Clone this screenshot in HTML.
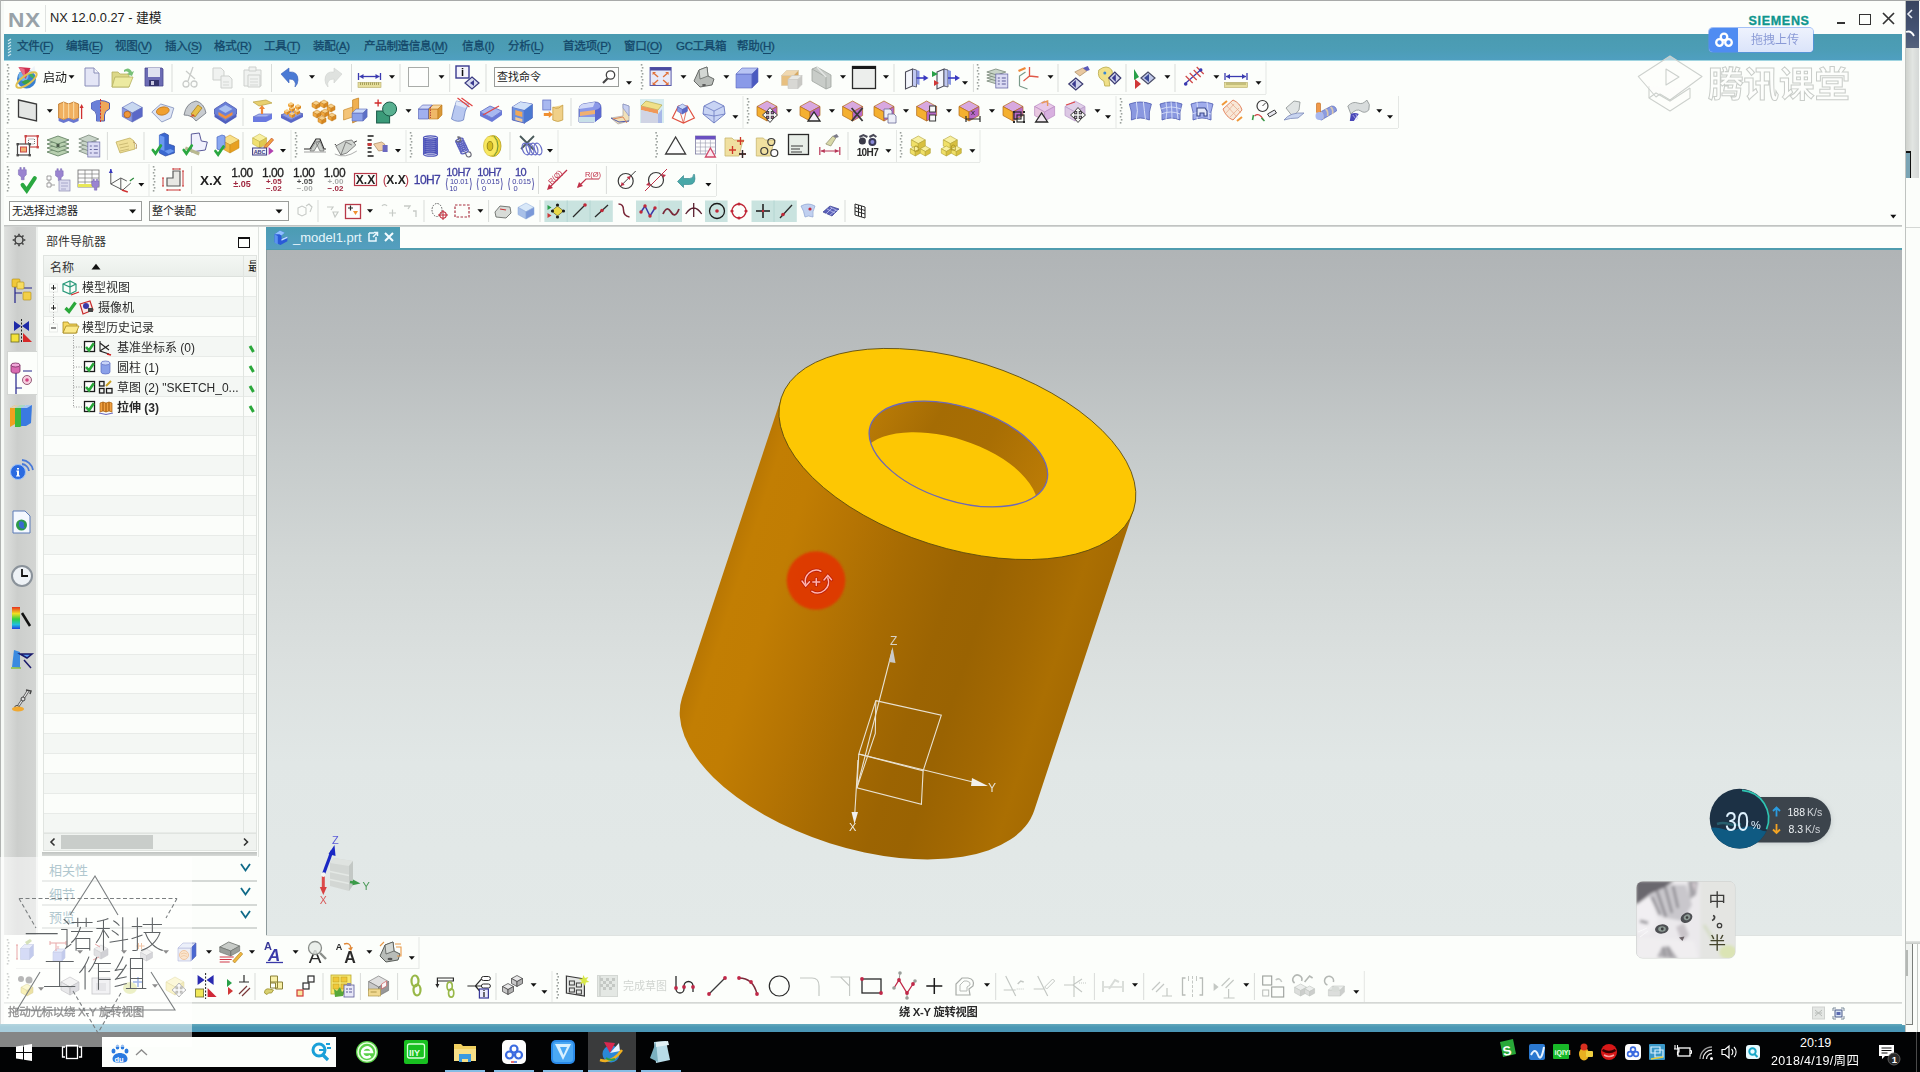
<!DOCTYPE html>
<html lang="zh"><head><meta charset="utf-8"><title>NX 12.0.0.27 - 建模</title>
<style>
*{margin:0;padding:0;box-sizing:border-box}
html,body{width:1920px;height:1072px;overflow:hidden;background:#fcfefb;
 font-family:"Liberation Sans","Noto Sans CJK SC",sans-serif;color:#222}
.a{position:absolute}
.t{position:absolute;white-space:nowrap;line-height:1}
svg{position:absolute;overflow:visible}
.blur{filter:blur(.4px)}
</style></head>
<body>
<!-- p0_base -->
<div class="a" style="left:0;top:0;width:1920px;height:1px;background:#a8aaa9"></div>
<div class="a" style="left:0;top:0;width:1px;height:1032px;background:#b0b3b1"></div>
<div class="a" style="left:1px;top:1px;width:3px;height:1031px;background:#f6f9f6"></div><div class="a" style="left:4px;top:227px;width:1px;height:708px;background:#dfe2df"></div>
<div class="t" style="left:8px;top:9px;font-size:21px;font-weight:bold;color:#98a2a8;letter-spacing:0.5px;transform:scaleX(1.08);transform-origin:0 0">NX</div>
<div class="a" style="left:45px;top:5px;width:1px;height:27px;background:#dfe2e0"></div>
<div class="t" style="left:50px;top:12px;font-size:12.800px;color:#1c1c1c">NX 12.0.0.27 - 建模</div>
<div class="t" style="left:1748.500px;top:14.500px;font-size:12.500px;font-weight:bold;color:#0f968e;letter-spacing:0.700px;-webkit-text-stroke:.35px #0f968e">SIEMENS</div>
<div class="a" style="left:1837px;top:22px;width:8px;height:2px;background:#333"></div>
<div class="a" style="left:1859px;top:14px;width:12px;height:11px;border:1.5px solid #333"></div>
<svg style="left:1882px;top:12px" width="13" height="13"><path d="M1 1L12 12M12 1L1 12" stroke="#333" stroke-width="1.7"/></svg>
<div class="a" style="left:4px;top:34px;width:1898px;height:26px;background:linear-gradient(#4a9bb0,#4c9db6 60%,#4f9fc0)"></div>
<div class="a" style="left:4px;top:60px;width:1898px;height:1px;background:#9fd4e0"></div>
<svg style="left:7px;top:38px" width="6" height="20"><path d="M1 3 l3 -2" stroke="#cfe8ee" stroke-width="1.2"/><path d="M1 6 l3 -2" stroke="#cfe8ee" stroke-width="1.2"/><path d="M1 9 l3 -2" stroke="#cfe8ee" stroke-width="1.2"/><path d="M1 12 l3 -2" stroke="#cfe8ee" stroke-width="1.2"/><path d="M1 15 l3 -2" stroke="#cfe8ee" stroke-width="1.2"/><path d="M1 18 l3 -2" stroke="#cfe8ee" stroke-width="1.2"/></svg>
<div class="t mn" style="left:17px;top:41px;font-size:11.500px;color:#14486a;letter-spacing:-0.300px;-webkit-text-stroke:.3px #14486a">文件(F)</div>
<div class="t mn" style="left:66px;top:41px;font-size:11.500px;color:#14486a;letter-spacing:-0.300px;-webkit-text-stroke:.3px #14486a">编辑(E)</div>
<div class="t mn" style="left:115px;top:41px;font-size:11.500px;color:#14486a;letter-spacing:-0.300px;-webkit-text-stroke:.3px #14486a">视图(V)</div>
<div class="t mn" style="left:165px;top:41px;font-size:11.500px;color:#14486a;letter-spacing:-0.300px;-webkit-text-stroke:.3px #14486a">插入(S)</div>
<div class="t mn" style="left:214px;top:41px;font-size:11.500px;color:#14486a;letter-spacing:-0.300px;-webkit-text-stroke:.3px #14486a">格式(R)</div>
<div class="t mn" style="left:264px;top:41px;font-size:11.500px;color:#14486a;letter-spacing:-0.300px;-webkit-text-stroke:.3px #14486a">工具(T)</div>
<div class="t mn" style="left:313px;top:41px;font-size:11.500px;color:#14486a;letter-spacing:-0.300px;-webkit-text-stroke:.3px #14486a">装配(A)</div>
<div class="t mn" style="left:364px;top:41px;font-size:11.500px;color:#14486a;letter-spacing:-0.300px;-webkit-text-stroke:.3px #14486a">产品制造信息(M)</div>
<div class="t mn" style="left:462px;top:41px;font-size:11.500px;color:#14486a;letter-spacing:-0.300px;-webkit-text-stroke:.3px #14486a">信息(I)</div>
<div class="t mn" style="left:508px;top:41px;font-size:11.500px;color:#14486a;letter-spacing:-0.300px;-webkit-text-stroke:.3px #14486a">分析(L)</div>
<div class="t mn" style="left:563px;top:41px;font-size:11.500px;color:#14486a;letter-spacing:-0.300px;-webkit-text-stroke:.3px #14486a">首选项(P)</div>
<div class="t mn" style="left:624px;top:41px;font-size:11.500px;color:#14486a;letter-spacing:-0.300px;-webkit-text-stroke:.3px #14486a">窗口(O)</div>
<div class="t mn" style="left:676px;top:41px;font-size:11.500px;color:#14486a;letter-spacing:-0.300px;-webkit-text-stroke:.3px #14486a">GC工具箱</div>
<div class="t mn" style="left:737px;top:41px;font-size:11.500px;color:#14486a;letter-spacing:-0.300px;-webkit-text-stroke:.3px #14486a">帮助(H)</div>
<div class="a" style="left:42.9px;top:52.500px;width:6.8px;height:1px;background:#14486a"></div>
<div class="a" style="left:91.9px;top:52.500px;width:7.4px;height:1px;background:#14486a"></div>
<div class="a" style="left:140.9px;top:52.500px;width:7.4px;height:1px;background:#14486a"></div>
<div class="a" style="left:190.9px;top:52.500px;width:7.4px;height:1px;background:#14486a"></div>
<div class="a" style="left:239.9px;top:52.500px;width:8.0px;height:1px;background:#14486a"></div>
<div class="a" style="left:289.9px;top:52.500px;width:6.8px;height:1px;background:#14486a"></div>
<div class="a" style="left:338.9px;top:52.500px;width:7.4px;height:1px;background:#14486a"></div>
<div class="a" style="left:434.7px;top:52.500px;width:9.3px;height:1px;background:#14486a"></div>
<div class="a" style="left:487.6px;top:52.500px;width:3.6px;height:1px;background:#14486a"></div>
<div class="a" style="left:533.9px;top:52.500px;width:6.1px;height:1px;background:#14486a"></div>
<div class="a" style="left:600.1px;top:52.500px;width:7.4px;height:1px;background:#14486a"></div>
<div class="a" style="left:649.9px;top:52.500px;width:8.7px;height:1px;background:#14486a"></div>
<div class="a" style="left:762.9px;top:52.500px;width:8.0px;height:1px;background:#14486a"></div>
<!-- p1_toolbars -->
<div class="a" style="left:6px;top:94px;width:1260px;height:1px;background:#e6e9e6"></div>
<div class="a" style="left:6px;top:128px;width:1392px;height:1px;background:#e6e9e6"></div>
<div class="a" style="left:6px;top:162px;width:974px;height:1px;background:#e6e9e6"></div>
<div class="a" style="left:6px;top:196px;width:710px;height:1px;background:#e6e9e6"></div>
<svg style="left:0;top:0;filter:blur(.4px)" width="1920" height="230" viewBox="0 0 1920 230"><rect x="6.8" y="64" width="1.600" height="1.600" fill="#9aa09c"/><rect x="7.8" y="67" width="1.600" height="1.600" fill="#9aa09c"/><rect x="6.8" y="70" width="1.600" height="1.600" fill="#9aa09c"/><rect x="7.8" y="73" width="1.600" height="1.600" fill="#9aa09c"/><rect x="6.8" y="76" width="1.600" height="1.600" fill="#9aa09c"/><rect x="7.8" y="79" width="1.600" height="1.600" fill="#9aa09c"/><rect x="6.8" y="82" width="1.600" height="1.600" fill="#9aa09c"/><rect x="7.8" y="85" width="1.600" height="1.600" fill="#9aa09c"/><rect x="6.8" y="88" width="1.600" height="1.600" fill="#9aa09c"/><g transform="translate(26.5 77.0)"><circle cx="0" cy="2" r="9.500" fill="#3a80d0"/><circle cx="-3" cy="-1" r="5" fill="#8ac8f0" fill-opacity=".75"/><path d="M-5 5q4 5 10 1q-2-6-10-1z" fill="#3aa048"/><path d="M2-4q5 0 6 5q-4 1-6-5z" fill="#48b058"/><path d="M-8-10l12 1-5 11z" fill="#d03050"/><path d="M-8-10l6 2 1 10z" fill="#e87088"/><path d="M0-3l8-8 1 7z" fill="#e8f0f8" fill-opacity=".8"/><ellipse cx="0" cy="3" rx="12" ry="4.500" fill="none" stroke="#e0c050" stroke-width="2" transform="rotate(-35 0 3)"/></g><text x="43.0" y="81.5" font-size="12" fill="#111" font-weight="normal" text-anchor="start" font-family="Liberation Sans,Noto Sans CJK SC,sans-serif">启动</text><path d="M68.5 75.2h6l-3 3.600z" fill="#111"/><g transform="translate(92.0 77.0)"><path d="M-7-9h9l5 5v13h-14z" fill="#e4e6f6" stroke="#8a8eb8" stroke-width="1"/><path d="M2-9v5h5" fill="#f4f5fc" stroke="#8a8eb8" stroke-width="1"/></g><g transform="translate(122.0 77.0)"><path d="M-10-5h6l2 2h9v13h-17z" fill="#dcd888" stroke="#b4b060" stroke-width="0.8"/><path d="M-10 10l3-10h18l-4 10z" fill="#eceaa0" stroke="#b4b060" stroke-width="0.8"/><path d="M2-7q5-4 8 2l2-1-2 5-5-2 2-1q-2-3-5-1z" fill="#78c078"/></g><g transform="translate(154.0 77.0)"><path d="M-9-9h17l1 1v17h-18z" fill="#6c6cb4" stroke="#4a4a90" stroke-width="0.8"/><path d="M-6-9h12v9h-12z" fill="#dfe2f0"/><path d="M-5 3h10v6h-10z" fill="#34346c"/><path d="M-3 4h3v4h-3z" fill="#c8c8e0"/></g><path d="M172.0 64V92" stroke="#d9dcd9" stroke-width="1"/><g transform="translate(191.0 77.0)"><g fill="none" stroke="#c9ccc9" stroke-width="1.300"><path d="M2-10l-5 14M-5-6l9 8"/><circle cx="-5" cy="7" r="3"/><circle cx="3" cy="7" r="3"/></g></g><g transform="translate(222.0 77.0)"><g fill="#f0f2f0" stroke="#cdd0cd" stroke-width="1"><path d="M-9-9h8l3 3v9h-11z"/><path d="M-1-1h8l3 3v9h-11z"/></g><path d="M1 5h6M1 8h6" stroke="#d5d8d5"/></g><g transform="translate(253.0 77.0)"><g fill="#f0f2f0" stroke="#cdd0cd" stroke-width="1"><path d="M-9-7h17v16h-17z"/><path d="M-4-10h7v4h-7z"/><path d="M-5-2h12v12h-12z"/></g><path d="M-3 2h8M-3 5h8M-3 8h8" stroke="#d5d8d5"/></g><path d="M271.5 64V92" stroke="#d9dcd9" stroke-width="1"/><g transform="translate(290.0 77.0)"><path d="M-9-3l8-6v4q9-1 9 8q0 4-3 7q2-8-6-8v4z" fill="#4a7ad4" stroke="#3a60b8" stroke-width="0.6"/></g><path d="M309.0 75.2h6l-3 3.600z" fill="#111"/><g transform="translate(333.0 77.0)"><path d="M9-3l-8-6v4q-9-1-9 8q0 4 3 7q-2-8 6-8v4z" fill="#dfe2df" stroke="#cfd2cf" stroke-width="0.6"/></g><path d="M351.5 64V92" stroke="#d9dcd9" stroke-width="1"/><g transform="translate(369.5 77.0)"><path d="M-11-4v7M11-4v7" fill="none" stroke="#3a3ab0" stroke-width="1.3"/><path d="M-10-0.500h20" fill="none" stroke="#3a3ab0" stroke-width="1.3"/><path d="M-10-0.500l4-2.500v5zM10-0.500l-4-2.500v5z" fill="#3a3ab0"/><rect x="-11.500" y="5.500" width="23" height="5" fill="#e6de9c" stroke="#b4ac68" stroke-width=".6"/><path d="M-9 5.500v2.500" stroke="#7a7630" stroke-width=".6"/><path d="M-7 5.500v2.500" stroke="#7a7630" stroke-width=".6"/><path d="M-5 5.500v2.500" stroke="#7a7630" stroke-width=".6"/><path d="M-3 5.500v2.500" stroke="#7a7630" stroke-width=".6"/><path d="M-1 5.500v2.500" stroke="#7a7630" stroke-width=".6"/><path d="M1 5.500v2.500" stroke="#7a7630" stroke-width=".6"/><path d="M3 5.500v2.500" stroke="#7a7630" stroke-width=".6"/><path d="M5 5.500v2.500" stroke="#7a7630" stroke-width=".6"/><path d="M7 5.500v2.500" stroke="#7a7630" stroke-width=".6"/><path d="M9 5.500v2.500" stroke="#7a7630" stroke-width=".6"/></g><path d="M389.0 75.2h6l-3 3.600z" fill="#111"/><path d="M400.0 64V92" stroke="#d9dcd9" stroke-width="1"/><rect x="408.500" y="67.500" width="20" height="19" fill="#fdfefd" stroke="#a9aca9" stroke-width="1"/><path d="M438.5 75.2h6l-3 3.600z" fill="#111"/><path d="M449.7 64V92" stroke="#d9dcd9" stroke-width="1"/><g transform="translate(467.0 77.0)"><rect x="-11" y="-11" width="13" height="12" fill="#f4f4fc" stroke="#3a3a90" stroke-width="1.400"/><text x="-4.5" y="-1.5" font-size="11" fill="#111" font-weight="bold" text-anchor="middle" font-family="Liberation Sans,Noto Sans CJK SC,sans-serif" font-family="Liberation Serif,serif">i</text><path d="M5 0l7 6-7 6-7-6z" fill="#d8dcf0" stroke="#3a3a80" stroke-width="1.2"/><path d="M7 3v6l-4-3z" fill="#3a3a90"/></g><path d="M486.0 64V92" stroke="#d9dcd9" stroke-width="1"/><rect x="494.500" y="67.500" width="124" height="19" fill="#fdfefd" stroke="#9a9d9a" stroke-width="1"/><text x="497.0" y="81.3" font-size="11" fill="#222" font-weight="normal" text-anchor="start" font-family="Liberation Sans,Noto Sans CJK SC,sans-serif">查找命令</text><circle cx="610.500" cy="75" r="4.200" fill="#fff" stroke="#444" stroke-width="1.300"/><path d="M607.500 78.500l-4.500 4.500" stroke="#444" stroke-width="2.200"/><path d="M626.0 81.2h6l-3 3.600z" fill="#111"/><rect x="640.8" y="64" width="1.600" height="1.600" fill="#9aa09c"/><rect x="641.8" y="67" width="1.600" height="1.600" fill="#9aa09c"/><rect x="640.8" y="70" width="1.600" height="1.600" fill="#9aa09c"/><rect x="641.8" y="73" width="1.600" height="1.600" fill="#9aa09c"/><rect x="640.8" y="76" width="1.600" height="1.600" fill="#9aa09c"/><rect x="641.8" y="79" width="1.600" height="1.600" fill="#9aa09c"/><rect x="640.8" y="82" width="1.600" height="1.600" fill="#9aa09c"/><rect x="641.8" y="85" width="1.600" height="1.600" fill="#9aa09c"/><rect x="640.8" y="88" width="1.600" height="1.600" fill="#9aa09c"/><g transform="translate(660.6 77.0)"><rect x="-10.500" y="-9.500" width="21" height="18" fill="#e8eaf8" stroke="#5a5aa8" stroke-width="1"/><rect x="-10.500" y="-9.500" width="21" height="3" fill="#4a4aa0"/><path d="M-2.500 0l-4-3.500M2.500 0l4-3.500M-2.500 3l-4 3.500M2.500 3l4 3.500" fill="none" stroke="#e07038" stroke-width="1.4"/><path d="M-8-5h3.500l-3.500 3zM8-5h-3.500l3.500 3zM-8 8h3.500l-3.500-3zM8 8h-3.500l3.500-3z" fill="#e07038"/></g><path d="M680.5 75.2h6l-3 3.600z" fill="#111"/><g transform="translate(704.0 77.0)"><path d="M-10 4l5-11 8-3 1 9 6 3-2 6-12 2z" fill="#b8bcb8" stroke="#5a5e5a" stroke-width="0.9"/><path d="M-5-7l8-3 1 9-8 3z" fill="#d4d8d4" stroke="#5a5e5a" stroke-width="0.7"/><ellipse cx="0" cy="8" rx="2" ry="1" fill="#555"/></g><path d="M723.4 75.2h6l-3 3.600z" fill="#111"/><g transform="translate(747.0 78.0)"><path d="M-11.0 -4.0h16.0v14.0h-16.0z" fill="#8a9ae8" stroke="#5a68c0" stroke-width=".6" stroke-linejoin="round"/><path d="M-11.0 -4.0l6.0 -6.0h16.0l-6.0 6.0z" fill="#b8c4f4" stroke="#5a68c0" stroke-width=".6" stroke-linejoin="round"/><path d="M5.0 -4.0l6.0 -6.0v14.0l-6.0 6.0z" fill="#4a5ac0" stroke="#5a68c0" stroke-width=".6" stroke-linejoin="round"/></g><path d="M766.4 75.2h6l-3 3.600z" fill="#111"/><g transform="translate(790.0 78.0)"><path d="M-8.5 -2.5h12.0v10.0h-12.0z" fill="#e8c080" stroke="#d8c8a8" stroke-width=".6" stroke-linejoin="round"/><path d="M-8.5 -2.5l5.0 -5.0h12.0l-5.0 5.0z" fill="#f0d8b0" stroke="#d8c8a8" stroke-width=".6" stroke-linejoin="round"/><path d="M3.5 -2.5l5.0 -5.0v10.0l-5.0 5.0z" fill="#d8a860" stroke="#d8c8a8" stroke-width=".6" stroke-linejoin="round"/><g transform="translate(5 4)"><path d="M-7.0 -2.5h10.0v9.0h-10.0z" fill="#d8d8d4" stroke="#c8c8c4" stroke-width=".6" stroke-linejoin="round"/><path d="M-7.0 -2.5l4.0 -4.0h10.0l-4.0 4.0z" fill="#e8e8e4" stroke="#c8c8c4" stroke-width=".6" stroke-linejoin="round"/><path d="M3.0 -2.5l4.0 -4.0v9.0l-4.0 4.0z" fill="#c8c8c4" stroke="#c8c8c4" stroke-width=".6" stroke-linejoin="round"/></g></g><g transform="translate(821.0 78.0)"><path d="M-9-9l5-2 14 8v12l-5 2-14-8z" fill="#c8ccc8" stroke="#a0a4a0" stroke-width="0.8"/><path d="M-9-9l14 8v12" fill="none" stroke="#a0a4a0" stroke-width="0.8"/><path d="M-4-11l9 10" fill="none" stroke="#e4e6e4" stroke-width="1.5"/></g><path d="M840.0 75.2h6l-3 3.600z" fill="#111"/><rect x="852.500" y="66.500" width="23" height="22" fill="#eceeec" stroke="#2a2a2a" stroke-width="1.300"/><rect x="852" y="66" width="24" height="3" fill="#1a1a1a"/><path d="M883.0 75.2h6l-3 3.600z" fill="#111"/><path d="M894.0 64V92" stroke="#d9dcd9" stroke-width="1"/><g transform="translate(914.5 78.0)"><path d="M-9-6l7-3v17l-7 3z" fill="#f4f6fc" stroke="#4a4a58" stroke-width="1.1"/><path d="M-2-9l4 1v17l-4-1z" fill="#c0c8f0" stroke="#4a4a58" stroke-width="0.8"/><path d="M2-8l3 1v14l-3-1" fill="#8a98e0"/><path d="M2 0h9" fill="none" stroke="#3a3ac0" stroke-width="1.6"/><path d="M9-3l5 3-5 3z" fill="#3a3ac0"/></g><g transform="translate(946.0 78.0)"><path d="M-9-6l7-3v17l-7 3z" fill="#f4f6fc" stroke="#4a4a58" stroke-width="1.1"/><path d="M-2-9l4 1v17l-4-1z" fill="#c0c8f0" stroke="#4a4a58" stroke-width="0.8"/><path d="M2-8l3 1v14l-3-1" fill="#8a98e0"/><path d="M2 0h9" fill="none" stroke="#3a3ac0" stroke-width="1.6"/><path d="M9-3l5 3-5 3z" fill="#3a3ac0"/><path d="M-14-7l6 3-6 3z" fill="#28a048"/><path d="M-12 2l5 3-5 3z" fill="#d03838"/></g><path d="M962.0 81.2h6l-3 3.600z" fill="#111"/><path d="M973.4 64V92" stroke="#d9dcd9" stroke-width="1"/><rect x="976.8" y="64" width="1.600" height="1.600" fill="#9aa09c"/><rect x="977.8" y="67" width="1.600" height="1.600" fill="#9aa09c"/><rect x="976.8" y="70" width="1.600" height="1.600" fill="#9aa09c"/><rect x="977.8" y="73" width="1.600" height="1.600" fill="#9aa09c"/><rect x="976.8" y="76" width="1.600" height="1.600" fill="#9aa09c"/><rect x="977.8" y="79" width="1.600" height="1.600" fill="#9aa09c"/><rect x="976.8" y="82" width="1.600" height="1.600" fill="#9aa09c"/><rect x="977.8" y="85" width="1.600" height="1.600" fill="#9aa09c"/><rect x="976.8" y="88" width="1.600" height="1.600" fill="#9aa09c"/><g transform="translate(997.8 78.0)"><path d="M-11 3l9-3 10 3-9 3z" fill="#c8d4c8" stroke="#6a7a6a" stroke-width="0.7"/><path d="M-11 0l9-3 10 3-9 3z" fill="#c8d4c8" stroke="#6a7a6a" stroke-width="0.7"/><path d="M-11 -3l9-3 10 3-9 3z" fill="#c8d4c8" stroke="#6a7a6a" stroke-width="0.7"/><path d="M-11 -6l9-3 10 3-9 3z" fill="#c8d4c8" stroke="#6a7a6a" stroke-width="0.7"/><rect x="-2" y="-4" width="12" height="14" fill="#dcdcf4" stroke="#6a6aa8" stroke-width=".8"/><path d="M0 0h2M4 0h4M0 3h2M4 3h4M0 6h2M4 6h4" fill="none" stroke="#5a5a98" stroke-width="1"/></g><g transform="translate(1027.5 78.0)"><path d="M-8 8v-10l6-4M-8 8l8 3" fill="none" stroke="#7a9a8a" stroke-width="1.2"/><path d="M2-2v-9M2-2l9 1M2-2l-6 5" fill="none" stroke="#e05848" stroke-width="1.3"/><path d="M-9-7l7-3" fill="none" stroke="#f08838" stroke-width="2.2"/></g><path d="M1047.5 75.2h6l-3 3.600z" fill="#111"/><path d="M1058.0 64V92" stroke="#d9dcd9" stroke-width="1"/><g transform="translate(1076.8 78.0)"><path d="M-8 6l7-6 7 6-7 6z" fill="#d0d4ec" stroke="#3a3a70" stroke-width="1.2"/><path d="M-1 2v8l-4-4z" fill="#3a3a90"/><path d="M-2-6l8-4 4 3-7 5z" fill="#e8c8a0" stroke="#a88860" stroke-width="0.7"/><path d="M6-10l5-2 2 4-3 1z" fill="#5a5ab8"/></g><g transform="translate(1107.8 78.0)"><path d="M-9-8q8-6 13 0q2 5-3 8l1 8h-5l-1-5q-7-3-5-11z" fill="#f0e088" stroke="#b8a848" stroke-width="0.8"/><circle cx="-3" cy="-5" r="1.500" fill="#3a88d0"/><g transform="translate(7 0)"><path d="M-6 0l6-6 6 6-6 6z" fill="#d0d4ec" stroke="#3a3a70" stroke-width="1.2"/><path d="M1-4v8l-4-4z" fill="#3a3a90"/></g></g><path d="M1126.0 64V92" stroke="#d9dcd9" stroke-width="1"/><g transform="translate(1144.0 78.0)"><path d="M-10-9l5 8-5 3z" fill="#28a048"/><path d="M-9 1l6 5-6 5z" fill="#d03838"/><g transform="translate(4 0)"><path d="M-7 0l7-6 7 6-7 6z" fill="#c0c8e8" stroke="#4a4e68" stroke-width="1.2"/><path d="M1-4v8l-5-4z" fill="#3a4a98"/></g></g><path d="M1164.4 75.2h6l-3 3.600z" fill="#111"/><path d="M1175.0 64V92" stroke="#d9dcd9" stroke-width="1"/><g transform="translate(1193.7 77.0)"><path d="M-9 7l17-15" fill="none" stroke="#3a3ab0" stroke-width="1.2"/><path d="M-8 -1l7 7" fill="none" stroke="#d04848" stroke-width="1.2"/><path d="M-4 -4l7 7" fill="none" stroke="#d04848" stroke-width="1.2"/><path d="M0 -7l7 7" fill="none" stroke="#d04848" stroke-width="1.2"/><path d="M3 -10l7 7" fill="none" stroke="#d04848" stroke-width="1.2"/><circle cx="-8" cy="7" r="1.800" fill="#3a3ab0"/><circle cx="7" cy="-7" r="1.800" fill="#3a3ab0"/></g><path d="M1213.4 75.2h6l-3 3.600z" fill="#111"/><g transform="translate(1236.0 77.0)"><path d="M-11-4v7M11-4v7" fill="none" stroke="#3a3ab0" stroke-width="1.3"/><path d="M-10-0.500h20" fill="none" stroke="#3a3ab0" stroke-width="1.3"/><path d="M-10-0.500l4-2.500v5zM10-0.500l-4-2.500v5z" fill="#3a3ab0"/><rect x="-11.500" y="5.500" width="23" height="5" fill="#e6de9c" stroke="#b4ac68" stroke-width=".6"/><path d="M-9 5.500v2.500" stroke="#7a7630" stroke-width=".6"/><path d="M-7 5.500v2.500" stroke="#7a7630" stroke-width=".6"/><path d="M-5 5.500v2.500" stroke="#7a7630" stroke-width=".6"/><path d="M-3 5.500v2.500" stroke="#7a7630" stroke-width=".6"/><path d="M-1 5.500v2.500" stroke="#7a7630" stroke-width=".6"/><path d="M1 5.500v2.500" stroke="#7a7630" stroke-width=".6"/><path d="M3 5.500v2.500" stroke="#7a7630" stroke-width=".6"/><path d="M5 5.500v2.500" stroke="#7a7630" stroke-width=".6"/><path d="M7 5.500v2.500" stroke="#7a7630" stroke-width=".6"/><path d="M9 5.500v2.500" stroke="#7a7630" stroke-width=".6"/></g><path d="M1255.5 81.2h6l-3 3.600z" fill="#111"/><path d="M1266.0 62V94" stroke="#e4e7e4" stroke-width="1"/><rect x="6.8" y="98" width="1.600" height="1.600" fill="#9aa09c"/><rect x="7.8" y="101" width="1.600" height="1.600" fill="#9aa09c"/><rect x="6.8" y="104" width="1.600" height="1.600" fill="#9aa09c"/><rect x="7.8" y="107" width="1.600" height="1.600" fill="#9aa09c"/><rect x="6.8" y="110" width="1.600" height="1.600" fill="#9aa09c"/><rect x="7.8" y="113" width="1.600" height="1.600" fill="#9aa09c"/><rect x="6.8" y="116" width="1.600" height="1.600" fill="#9aa09c"/><rect x="7.8" y="119" width="1.600" height="1.600" fill="#9aa09c"/><rect x="6.8" y="122" width="1.600" height="1.600" fill="#9aa09c"/><g transform="translate(27.5 111.0)"><path d="M-9-11l18 4v17l-18-4z" fill="#e4e6e4" stroke="#3a3a3a" stroke-width="1.3"/></g><path d="M46.8 109.2h6l-3 3.600z" fill="#111"/><g transform="translate(69.6 111.0)"><path d="M-11-7l5-2 5 2 5-2 5 2v14l-5 2-5-2-5 2-5-2z" fill="#f0b060" stroke="#b87020" stroke-width="0.8"/><path d="M-6-9v16M-1-7v16M4-9v16" fill="none" stroke="#f8d8a0" stroke-width="1.2"/><path d="M-11 7l5 2 5-2 5 2 5-2v3l-5 2-5-2-5 2-5-2z" fill="#6a78d0"/><path d="M12 8v-12" fill="none" stroke="#d03030" stroke-width="1.3"/><path d="M10-3l2-4 2 4z" fill="#d03030"/></g><g transform="translate(100.5 111.0)"><path d="M-9-8q9-5 18 0v6q-5 2-5 6v6h-8v-6q0-4-5-6z" fill="#f0a858" stroke="#4a58b0" stroke-width="1"/><path d="M-9-8q0 0 0 6q5 2 5 6v6h4v-21q-5 0-9 3z" fill="#6a80d8"/><path d="M0-12v24" fill="none" stroke="#d03030" stroke-width="1" stroke-dasharray="2 1.500"/></g><g transform="translate(132.3 112.0)"><path d="M0 -10.0L10.0 -4.5L0 1.0L-10.0 -4.5Z" fill="#c8d8f0" stroke="#5a68b8" stroke-width="0.6" stroke-linejoin="round"/><path d="M-10.0 -4.5L0 1.0L0 10.0L-10.0 4.5Z" fill="#8a98e0" stroke="#5a68b8" stroke-width="0.6" stroke-linejoin="round"/><path d="M10.0 -4.5L0 1.0L0 10.0L10.0 4.5Z" fill="#5a68c8" stroke="#5a68b8" stroke-width="0.6" stroke-linejoin="round"/><circle cx="-5" cy="2.500" r="3.300" fill="#f09838" stroke="#a85818" stroke-width=".7"/></g><g transform="translate(162.8 111.0)"><path d="M-11 1l9-8 13 4-3 10-9 4z" fill="#dce4f4" stroke="#8a98c0" stroke-width="0.9"/><ellipse cx="0" cy="0" rx="6.500" ry="4" fill="#f0a030" stroke="#b87018" stroke-width=".7" transform="rotate(-12)"/></g><g transform="translate(194.0 111.0)"><path d="M-10 4q2-12 12-14q8 2 10 12l-10 8q-4-6-12-6z" fill="#c8ccd0" stroke="#7a8088" stroke-width="0.9"/><path d="M-3 3l7-9 4 3-7 9z" fill="#e8c048" stroke="#a88020" stroke-width="0.8"/><path d="M-4 6l3-3 2 2z" fill="#d04828"/></g><g transform="translate(225.5 111.0)"><path d="M-11-2l11-7 11 7v5l-11 7-11-7z" fill="#6a80d8" stroke="#4a58b0" stroke-width="0.8"/><path d="M-7-2l7-4 7 4-7 4z" fill="#a8c0f0"/><path d="M-7 1l7 4 7-4v3l-7 4-7-4z" fill="#f09040"/><path d="M-11 3l11 7 11-7v3l-11 7-11-7z" fill="#5060c0"/></g><path d="M243.0 98V126" stroke="#d9dcd9" stroke-width="1"/><g transform="translate(262.0 111.0)"><path d="M-9-9l13-2 6 3-13 3z" fill="#e8d070" stroke="#b8a040" stroke-width="0.7"/><path d="M-9 6l6-3h13l-6 3z" fill="#a8b4f0" stroke="#5a68c0" stroke-width="0.7"/><path d="M-9 6h13v5h-13zM4 6l6-3v5l-6 3z" fill="#6a7ae0"/><path d="M0 3v-6" fill="none" stroke="#f08838" stroke-width="2.2"/><path d="M-3-2l3-4 3 4z" fill="#f08838"/></g><g transform="translate(292.0 112.0)"><path d="M-11 3l12-5 10 4-12 6z" fill="#8a98e0" stroke="#4a58b0" stroke-width="0.8"/><path d="M-11 3l10 5v3l-10-5zM-1 8l12-6v3l-12 6z" fill="#5a68c8"/><g transform="translate(-5 0)"><path d="M0 -3.0L3.0 -1.3L0 0.3L-3.0 -1.3Z" fill="#f8d088"/><path d="M-3.0 -1.3L0 0.3L0 3.0L-3.0 1.3Z" fill="#f0a840"/><path d="M3.0 -1.3L0 0.3L0 3.0L3.0 1.3Z" fill="#d88820"/></g><g transform="translate(0 -3)"><path d="M0 -3.0L3.0 -1.3L0 0.3L-3.0 -1.3Z" fill="#f8d088"/><path d="M-3.0 -1.3L0 0.3L0 3.0L-3.0 1.3Z" fill="#f0a840"/><path d="M3.0 -1.3L0 0.3L0 3.0L3.0 1.3Z" fill="#d88820"/></g><g transform="translate(5 0)"><path d="M0 -3.0L3.0 -1.3L0 0.3L-3.0 -1.3Z" fill="#f8d088"/><path d="M-3.0 -1.3L0 0.3L0 3.0L-3.0 1.3Z" fill="#f0a840"/><path d="M3.0 -1.3L0 0.3L0 3.0L3.0 1.3Z" fill="#d88820"/></g><g transform="translate(0 3)"><path d="M0 -3.0L3.0 -1.3L0 0.3L-3.0 -1.3Z" fill="#f8d088"/><path d="M-3.0 -1.3L0 0.3L0 3.0L-3.0 1.3Z" fill="#f0a840"/><path d="M3.0 -1.3L0 0.3L0 3.0L3.0 1.3Z" fill="#d88820"/></g><g transform="translate(-1 -7)"><path d="M0 -3.0L3.0 -1.3L0 0.3L-3.0 -1.3Z" fill="#f8d088"/><path d="M-3.0 -1.3L0 0.3L0 3.0L-3.0 1.3Z" fill="#f0a840"/><path d="M3.0 -1.3L0 0.3L0 3.0L3.0 1.3Z" fill="#d88820"/></g><g transform="translate(6 -5)"><path d="M0 -3.0L3.0 -1.3L0 0.3L-3.0 -1.3Z" fill="#f8d088"/><path d="M-3.0 -1.3L0 0.3L0 3.0L-3.0 1.3Z" fill="#f0a840"/><path d="M3.0 -1.3L0 0.3L0 3.0L3.0 1.3Z" fill="#d88820"/></g></g><g transform="translate(323.0 111.0)"><g transform="translate(-7 -6)"><path d="M0 -4.0L4.0 -1.8L0 0.4L-4.0 -1.8Z" fill="#f8d088" stroke="#c07818" stroke-width="0.5" stroke-linejoin="round"/><path d="M-4.0 -1.8L0 0.4L0 4.0L-4.0 1.8Z" fill="#f0a840" stroke="#c07818" stroke-width="0.5" stroke-linejoin="round"/><path d="M4.0 -1.8L0 0.4L0 4.0L4.0 1.8Z" fill="#d88820" stroke="#c07818" stroke-width="0.5" stroke-linejoin="round"/></g><g transform="translate(1 -7)"><path d="M0 -4.0L4.0 -1.8L0 0.4L-4.0 -1.8Z" fill="#f8d088" stroke="#c07818" stroke-width="0.5" stroke-linejoin="round"/><path d="M-4.0 -1.8L0 0.4L0 4.0L-4.0 1.8Z" fill="#f0a840" stroke="#c07818" stroke-width="0.5" stroke-linejoin="round"/><path d="M4.0 -1.8L0 0.4L0 4.0L4.0 1.8Z" fill="#d88820" stroke="#c07818" stroke-width="0.5" stroke-linejoin="round"/></g><g transform="translate(8 -3)"><path d="M0 -4.0L4.0 -1.8L0 0.4L-4.0 -1.8Z" fill="#f8d088" stroke="#c07818" stroke-width="0.5" stroke-linejoin="round"/><path d="M-4.0 -1.8L0 0.4L0 4.0L-4.0 1.8Z" fill="#f0a840" stroke="#c07818" stroke-width="0.5" stroke-linejoin="round"/><path d="M4.0 -1.8L0 0.4L0 4.0L4.0 1.8Z" fill="#d88820" stroke="#c07818" stroke-width="0.5" stroke-linejoin="round"/></g><g transform="translate(-6 3)"><path d="M0 -4.0L4.0 -1.8L0 0.4L-4.0 -1.8Z" fill="#f8d088" stroke="#c07818" stroke-width="0.5" stroke-linejoin="round"/><path d="M-4.0 -1.8L0 0.4L0 4.0L-4.0 1.8Z" fill="#f0a840" stroke="#c07818" stroke-width="0.5" stroke-linejoin="round"/><path d="M4.0 -1.8L0 0.4L0 4.0L4.0 1.8Z" fill="#d88820" stroke="#c07818" stroke-width="0.5" stroke-linejoin="round"/></g><g transform="translate(2 2)"><path d="M0 -4.0L4.0 -1.8L0 0.4L-4.0 -1.8Z" fill="#f8d088" stroke="#c07818" stroke-width="0.5" stroke-linejoin="round"/><path d="M-4.0 -1.8L0 0.4L0 4.0L-4.0 1.8Z" fill="#f0a840" stroke="#c07818" stroke-width="0.5" stroke-linejoin="round"/><path d="M4.0 -1.8L0 0.4L0 4.0L4.0 1.8Z" fill="#d88820" stroke="#c07818" stroke-width="0.5" stroke-linejoin="round"/></g><g transform="translate(9 6)"><path d="M0 -4.0L4.0 -1.8L0 0.4L-4.0 -1.8Z" fill="#f8d088" stroke="#c07818" stroke-width="0.5" stroke-linejoin="round"/><path d="M-4.0 -1.8L0 0.4L0 4.0L-4.0 1.8Z" fill="#f0a840" stroke="#c07818" stroke-width="0.5" stroke-linejoin="round"/><path d="M4.0 -1.8L0 0.4L0 4.0L4.0 1.8Z" fill="#d88820" stroke="#c07818" stroke-width="0.5" stroke-linejoin="round"/></g><g transform="translate(-1 9)"><path d="M0 -4.0L4.0 -1.8L0 0.4L-4.0 -1.8Z" fill="#f8d088" stroke="#c07818" stroke-width="0.5" stroke-linejoin="round"/><path d="M-4.0 -1.8L0 0.4L0 4.0L-4.0 1.8Z" fill="#f0a840" stroke="#c07818" stroke-width="0.5" stroke-linejoin="round"/><path d="M4.0 -1.8L0 0.4L0 4.0L4.0 1.8Z" fill="#d88820" stroke="#c07818" stroke-width="0.5" stroke-linejoin="round"/></g></g><g transform="translate(355.6 111.0)"><path d="M-3-11l6-2v22l-6 3z" fill="#f0b050" stroke="#c88828" stroke-width="0.8"/><path d="M-12-1l9-3v10l-9 3z" fill="#f4c478" stroke="#c88828" stroke-width="0.7"/><g transform="translate(4 4)"><path d="M-7.5 -2.0h11.0v8.0h-11.0z" fill="#8aa0e8" stroke="#5a68b8" stroke-width=".6" stroke-linejoin="round"/><path d="M-7.5 -2.0l4.0 -4.0h11.0l-4.0 4.0z" fill="#c8d8f8" stroke="#5a68b8" stroke-width=".6" stroke-linejoin="round"/><path d="M3.5 -2.0l4.0 -4.0v8.0l-4.0 4.0z" fill="#5a70c8" stroke="#5a68b8" stroke-width=".6" stroke-linejoin="round"/></g></g><g transform="translate(386.6 111.0)"><rect x="-10" y="0" width="13" height="12" fill="#3a9a78" stroke="#1a5a48" stroke-width="1"/><circle cx="3" cy="-2" r="7" fill="#58b090" stroke="#1a5a48" stroke-width="1"/><path d="M-12-8h7M-8.500-11.500v7" fill="none" stroke="#d02828" stroke-width="1.3"/></g><path d="M405.5 109.2h6l-3 3.600z" fill="#111"/><g transform="translate(429.5 112.0)"><g transform="translate(-4 0)"><path d="M-7.0 -3.0h10.0v10.0h-10.0z" fill="#a0b0f0" stroke="#4a58b0" stroke-width=".6" stroke-linejoin="round"/><path d="M-7.0 -3.0l4.0 -4.0h10.0l-4.0 4.0z" fill="#d0d8f8" stroke="#4a58b0" stroke-width=".6" stroke-linejoin="round"/><path d="M3.0 -3.0l4.0 -4.0v10.0l-4.0 4.0z" fill="#6a78d0" stroke="#4a58b0" stroke-width=".6" stroke-linejoin="round"/></g><g transform="translate(6 0)"><path d="M-6.5 -3.0h9.0v10.0h-9.0z" fill="#f0b868" stroke="#c07818" stroke-width=".6" stroke-linejoin="round"/><path d="M-6.5 -3.0l4.0 -4.0h9.0l-4.0 4.0z" fill="#f8d8a0" stroke="#c07818" stroke-width=".6" stroke-linejoin="round"/><path d="M2.5 -3.0l4.0 -4.0v10.0l-4.0 4.0z" fill="#d89838" stroke="#c07818" stroke-width=".6" stroke-linejoin="round"/></g><path d="M1-5v11" fill="none" stroke="#b03030" stroke-width="0.8" stroke-dasharray="1.500 1"/></g><g transform="translate(460.5 111.0)"><path d="M-9 8q2-10 5-18l12 3q-4 6-5 16q-6 3-12-1z" fill="#b8c8f0" stroke="#6a80c0" stroke-width="0.8"/><path d="M-4-10l12 3-3 4-10-3z" fill="#e0e8f8"/><path d="M-3-13l12 9M1-13l11 8" fill="none" stroke="#e04040" stroke-width="1.2"/></g><g transform="translate(491.0 112.0)"><path d="M-11 0l10-6 12 5-10 7z" fill="#a8b8f0" stroke="#5a68c0" stroke-width="0.8"/><path d="M-11 0l12 6v4l-12-6zM1 6l10-7v4l-10 7z" fill="#6a7ad8"/><path d="M-8 3l16-9" fill="none" stroke="#e04848" stroke-width="1.3"/></g><g transform="translate(522.3 111.0)"><path d="M-10-4l8-5 12 2v14l-8 5-12-3z" fill="#6a90e0" stroke="#4a58b0" stroke-width="0.8"/><path d="M-10-4l12 3v14" fill="none" stroke="#4a58b0" stroke-width="0.6"/><path d="M-7-1l7 2v5l-7-2z" fill="#f0a858"/><path d="M-7 6l7 2v3l-7-2z" fill="#f0c898"/><path d="M2-1l8-6v14l-8 5z" fill="#4a78d0"/><path d="M-2-9l12 2-8 6-12-3z" fill="#d0e0f8"/></g><g transform="translate(552.8 111.0)"><rect x="-10" y="-11" width="8" height="10" fill="#a8b8f0" stroke="#5a68c0" stroke-width=".7"/><path d="M0-4v13q5 3 10 0v-15" fill="#f0d088" stroke="#c09838" stroke-width="0.7"/><path d="M0-4q3 2 6 1l4-3" fill="none" stroke="#c09838" stroke-width="0.7"/><path d="M-9 2h5v-2l4 3.500-4 3.500v-2h-5z" fill="#f09030"/></g><path d="M571.0 98V126" stroke="#d9dcd9" stroke-width="1"/><g transform="translate(590.0 112.0)"><path d="M-11-3q0-4 4-5l12-2q6 0 6 6v9l-7 5h-15z" fill="#8a98e8" stroke="#4a58b0" stroke-width="0.8"/><path d="M-11-3q0-4 4-5l12-2-2 5-14 2z" fill="#d0d8f8"/><path d="M-10 0l15-2v4l-15 2z" fill="#f0b070"/><path d="M-11 5h16v5h-16z" fill="#c8e0e8"/><path d="M5-2q6-1 6-6v13l-6 5z" fill="#5a68d0"/></g><g transform="translate(621.0 112.0)"><path d="M-10 6l12-2 0-12 6 2v15l-11 3z" fill="#f0e0b8" stroke="#a8a0a0" stroke-width="0.7"/><path d="M2-8l6 2v10l-6-8z" fill="#c8d0f0" stroke="#7a88c0" stroke-width="0.6"/><path d="M-10 6l8 4 10-1" fill="none" stroke="#4a58b0" stroke-width="1"/><path d="M-8 7l10-2 4 6" fill="none" stroke="#e08858" stroke-width="1"/></g><g transform="translate(652.0 111.0)"><rect x="-12" y="-12" width="24" height="24" fill="#c0e0e8" fill-opacity=".6"/><path d="M-11-5l5-5 16 4-4 5z" fill="#f0e088" stroke="#a8a040" stroke-width="0.6"/><path d="M-11-5l17 4v4l-17-4z" fill="#f09858"/><path d="M-11-1l17 4v9h-17z" fill="#d0d4e4"/><path d="M6 3l4-5v14h-4z" fill="#a8b8e8"/></g><g transform="translate(683.4 112.0)"><path d="M-11 6l6-12h9l7 12-11 5z" fill="none" stroke="#e05040" stroke-width="1.2"/><path d="M-5-6l5 17M4-6l-4 17" fill="none" stroke="#e05040" stroke-width="0.8"/><g transform="translate(-1 -3)"><path d="M0 -5.0L5.0 -2.2L0 0.5L-5.0 -2.2Z" fill="#c8d8f8" stroke="#4a58b0" stroke-width="0.5" stroke-linejoin="round"/><path d="M-5.0 -2.2L0 0.5L0 5.0L-5.0 2.2Z" fill="#8a9ae8" stroke="#4a58b0" stroke-width="0.5" stroke-linejoin="round"/><path d="M5.0 -2.2L0 0.5L0 5.0L5.0 2.2Z" fill="#5a68c8" stroke="#4a58b0" stroke-width="0.5" stroke-linejoin="round"/></g></g><g transform="translate(714.0 112.0)"><path d="M0-11l10 5 1 8-11 9-11-9 1-8z" fill="#c8d4f4" stroke="#6a78c0" stroke-width="0.9"/><path d="M-10-6l10 5 10-5M0-1v12M-11 2l11 2 11-2" fill="none" stroke="#6a78c0" stroke-width="0.8"/></g><path d="M732.4 115.2h6l-3 3.600z" fill="#111"/><path d="M743.0 96V128" stroke="#e4e7e4" stroke-width="1"/><rect x="746.8" y="98" width="1.600" height="1.600" fill="#9aa09c"/><rect x="747.8" y="101" width="1.600" height="1.600" fill="#9aa09c"/><rect x="746.8" y="104" width="1.600" height="1.600" fill="#9aa09c"/><rect x="747.8" y="107" width="1.600" height="1.600" fill="#9aa09c"/><rect x="746.8" y="110" width="1.600" height="1.600" fill="#9aa09c"/><rect x="747.8" y="113" width="1.600" height="1.600" fill="#9aa09c"/><rect x="746.8" y="116" width="1.600" height="1.600" fill="#9aa09c"/><rect x="747.8" y="119" width="1.600" height="1.600" fill="#9aa09c"/><rect x="746.8" y="122" width="1.600" height="1.600" fill="#9aa09c"/><g transform="translate(767.0 111.0)"><path d="M0 -10.0L10.0 -4.5L0 1.0L-10.0 -4.5Z" fill="#d8a8e0" stroke="#b06818" stroke-width="0.7" stroke-linejoin="round"/><path d="M-10.0 -4.5L0 1.0L0 10.0L-10.0 4.5Z" fill="#f4b030" stroke="#b06818" stroke-width="0.7" stroke-linejoin="round"/><path d="M10.0 -4.5L0 1.0L0 10.0L10.0 4.5Z" fill="#b868c8" stroke="#b06818" stroke-width="0.7" stroke-linejoin="round"/><g stroke="#444" stroke-width="3.400" fill="none"><path d="M3.0 -0.5V8.5M-1.5 4.0H7.5"/></g><path d="M3.0 -3.5l3.500 4h-7zM3.0 11.5l3.500-4h-7zM-4.5 4.0l4-3.500v7zM10.5 4.0l-4-3.500v7z" fill="#f4f4f4" stroke="#444" stroke-width="1"/><g stroke="#f4f4f4" stroke-width="1.600" fill="none"><path d="M3.0 -1.5V9.5M-2.5 4.0H8.5"/></g></g><path d="M786.0 109.2h6l-3 3.600z" fill="#111"/><g transform="translate(810.0 111.0)"><path d="M0 -10.0L10.0 -4.5L0 1.0L-10.0 -4.5Z" fill="#d8a8e0" stroke="#b06818" stroke-width="0.7" stroke-linejoin="round"/><path d="M-10.0 -4.5L0 1.0L0 10.0L-10.0 4.5Z" fill="#f4b030" stroke="#b06818" stroke-width="0.7" stroke-linejoin="round"/><path d="M10.0 -4.5L0 1.0L0 10.0L10.0 4.5Z" fill="#b868c8" stroke="#b06818" stroke-width="0.7" stroke-linejoin="round"/><path d="M-2 10l6-9 6 9z" fill="#f4f0f8" stroke="#2a2a2a" stroke-width="1.3"/></g><path d="M829.0 109.2h6l-3 3.600z" fill="#111"/><g transform="translate(852.6 111.0)"><path d="M0 -10.0L10.0 -4.5L0 1.0L-10.0 -4.5Z" fill="#d8a8e0" stroke="#b06818" stroke-width="0.7" stroke-linejoin="round"/><path d="M-10.0 -4.5L0 1.0L0 10.0L-10.0 4.5Z" fill="#f4b030" stroke="#b06818" stroke-width="0.7" stroke-linejoin="round"/><path d="M10.0 -4.5L0 1.0L0 10.0L10.0 4.5Z" fill="#b868c8" stroke="#b06818" stroke-width="0.7" stroke-linejoin="round"/><path d="M-1-3l11 13M10-3l-11 13" fill="none" stroke="#3a3a3a" stroke-width="1.8"/></g><g transform="translate(884.0 111.0)"><path d="M0 -10.0L10.0 -4.5L0 1.0L-10.0 -4.5Z" fill="#d8a8e0" stroke="#b06818" stroke-width="0.7" stroke-linejoin="round"/><path d="M-10.0 -4.5L0 1.0L0 10.0L-10.0 4.5Z" fill="#f4b030" stroke="#b06818" stroke-width="0.7" stroke-linejoin="round"/><path d="M10.0 -4.5L0 1.0L0 10.0L10.0 4.5Z" fill="#b868c8" stroke="#b06818" stroke-width="0.7" stroke-linejoin="round"/><g fill="#eceef8" stroke="#6a6a98" stroke-width=".8"><path d="M0-2h6l2 2v7h-8z"/><path d="M4 3h6l2 2v7h-8z"/></g></g><path d="M903.0 109.2h6l-3 3.600z" fill="#111"/><g transform="translate(926.6 111.0)"><path d="M0 -10.0L10.0 -4.5L0 1.0L-10.0 -4.5Z" fill="#d8a8e0" stroke="#b06818" stroke-width="0.7" stroke-linejoin="round"/><path d="M-10.0 -4.5L0 1.0L0 10.0L-10.0 4.5Z" fill="#f4b030" stroke="#b06818" stroke-width="0.7" stroke-linejoin="round"/><path d="M10.0 -4.5L0 1.0L0 10.0L10.0 4.5Z" fill="#b868c8" stroke="#b06818" stroke-width="0.7" stroke-linejoin="round"/><rect x="3" y="-5" width="6" height="6" fill="#f8f8f8" stroke="#3a3a3a" stroke-width="1"/><rect x="3" y="4" width="6" height="6" fill="#f8f8f8" stroke="#3a3a3a" stroke-width="1"/></g><path d="M946.0 109.2h6l-3 3.600z" fill="#111"/><g transform="translate(969.0 111.0)"><path d="M0 -10.0L10.0 -4.5L0 1.0L-10.0 -4.5Z" fill="#d8a8e0" stroke="#b06818" stroke-width="0.7" stroke-linejoin="round"/><path d="M-10.0 -4.5L0 1.0L0 10.0L-10.0 4.5Z" fill="#f4b030" stroke="#b06818" stroke-width="0.7" stroke-linejoin="round"/><path d="M10.0 -4.5L0 1.0L0 10.0L10.0 4.5Z" fill="#b868c8" stroke="#b06818" stroke-width="0.7" stroke-linejoin="round"/><path d="M-3 8h14M-3 5v6M11 5v6" fill="none" stroke="#2a2a2a" stroke-width="1.2"/><text x="4.0" y="4.0" font-size="8" fill="#2a2a2a" font-weight="normal" text-anchor="middle" font-family="Liberation Sans,Noto Sans CJK SC,sans-serif">x</text></g><path d="M989.0 109.2h6l-3 3.600z" fill="#111"/><g transform="translate(1013.0 111.0)"><path d="M0 -10.0L10.0 -4.5L0 1.0L-10.0 -4.5Z" fill="#d8a8e0" stroke="#b06818" stroke-width="0.7" stroke-linejoin="round"/><path d="M-10.0 -4.5L0 1.0L0 10.0L-10.0 4.5Z" fill="#f4b030" stroke="#b06818" stroke-width="0.7" stroke-linejoin="round"/><path d="M10.0 -4.5L0 1.0L0 10.0L10.0 4.5Z" fill="#b868c8" stroke="#b06818" stroke-width="0.7" stroke-linejoin="round"/><rect x="1" y="1" width="7" height="7" fill="none" stroke="#2a2a2a" stroke-width="1.200"/><rect x="4" y="4" width="7" height="7" fill="none" stroke="#2a2a2a" stroke-width="1.200"/><rect x="0" y="0" width="2" height="2" fill="#2a2a2a"/><rect x="10" y="0" width="2" height="2" fill="#2a2a2a"/><rect x="0" y="10" width="2" height="2" fill="#2a2a2a"/><rect x="10" y="10" width="2" height="2" fill="#2a2a2a"/></g><g transform="translate(1044.6 111.0)"><path d="M0 -10.0L10.0 -4.5L0 1.0L-10.0 -4.5Z" fill="#e8c8e8" stroke="#b888c0" stroke-width="0.7" stroke-linejoin="round"/><path d="M-10.0 -4.5L0 1.0L0 10.0L-10.0 4.5Z" fill="#e8c8e0" stroke="#b888c0" stroke-width="0.7" stroke-linejoin="round"/><path d="M10.0 -4.5L0 1.0L0 10.0L10.0 4.5Z" fill="#d8b0e0" stroke="#b888c0" stroke-width="0.7" stroke-linejoin="round"/><path d="M-3-8l6-2v5" fill="none" stroke="#e89858" stroke-width="1.4"/><path d="M-9 11l6-9 6 9z" fill="#f0e8f0" stroke="#2a2a2a" stroke-width="1.3"/></g><g transform="translate(1075.0 111.0)"><path d="M0 -10.0L10.0 -4.5L0 1.0L-10.0 -4.5Z" fill="#e0d0e8" stroke="#b898c8" stroke-width="0.7" stroke-linejoin="round"/><path d="M-10.0 -4.5L0 1.0L0 10.0L-10.0 4.5Z" fill="#dcc8e4" stroke="#b898c8" stroke-width="0.7" stroke-linejoin="round"/><path d="M10.0 -4.5L0 1.0L0 10.0L10.0 4.5Z" fill="#d0b8dc" stroke="#b898c8" stroke-width="0.7" stroke-linejoin="round"/><path d="M-9-6l9-3" fill="none" stroke="#e04848" stroke-width="1.3"/><g stroke="#444" stroke-width="3.400" fill="none"><path d="M3.0 -0.5V8.5M-1.5 4.0H7.5"/></g><path d="M3.0 -3.5l3.500 4h-7zM3.0 11.5l3.500-4h-7zM-4.5 4.0l4-3.500v7zM10.5 4.0l-4-3.500v7z" fill="#f4f4f4" stroke="#444" stroke-width="1"/><g stroke="#f4f4f4" stroke-width="1.600" fill="none"><path d="M3.0 -1.5V9.5M-2.5 4.0H8.5"/></g></g><path d="M1094.5 109.2h6l-3 3.600z" fill="#111"/><path d="M1105.0 115.2h6l-3 3.600z" fill="#111"/><path d="M1116.0 96V128" stroke="#e4e7e4" stroke-width="1"/><rect x="1119.8" y="98" width="1.600" height="1.600" fill="#9aa09c"/><rect x="1120.8" y="101" width="1.600" height="1.600" fill="#9aa09c"/><rect x="1119.8" y="104" width="1.600" height="1.600" fill="#9aa09c"/><rect x="1120.8" y="107" width="1.600" height="1.600" fill="#9aa09c"/><rect x="1119.8" y="110" width="1.600" height="1.600" fill="#9aa09c"/><rect x="1120.8" y="113" width="1.600" height="1.600" fill="#9aa09c"/><rect x="1119.8" y="116" width="1.600" height="1.600" fill="#9aa09c"/><rect x="1120.8" y="119" width="1.600" height="1.600" fill="#9aa09c"/><rect x="1119.8" y="122" width="1.600" height="1.600" fill="#9aa09c"/><g transform="translate(1140.4 111.0)"><path d="M-11-7q11-4 22 0q-3 8-2 16q-9-4-18 0q1-8-2-16z" fill="#8a98e0" stroke="#4a58b0" stroke-width="0.8"/><path d="M-4-9q2 9 0 17M3-9q1 9 2 17" fill="none" stroke="#d8e0f8" stroke-width="1"/></g><g transform="translate(1171.0 111.0)"><path d="M-11-7q11-4 22 0q-3 8-2 16q-9-4-18 0q1-8-2-16z" fill="#8a98e0" stroke="#4a58b0" stroke-width="0.8"/><path d="M-5-9q2 9 0 17M0-10q1 9 1 18M5-9q1 9 2 17M-10-2q10-4 20 0M-10 3q10-4 19 0" fill="none" stroke="#d8e0f8" stroke-width="0.9"/></g><g transform="translate(1202.0 111.0)"><path d="M-11-7q11-4 22 0q-3 8-2 16q-9-4-18 0q1-8-2-16z" fill="#a0acec" stroke="#4a58b0" stroke-width="0.8"/><path d="M-5-9q2 9 0 17M5-9q1 9 2 17M-10 3q10-4 19 0" fill="none" stroke="#d8e0f8" stroke-width="0.9"/><path d="M-5-3h8l2 3v5h-3v-3h-4v3h-3z" fill="#e4e8f8" stroke="#3a488a" stroke-width="1.1"/></g><g transform="translate(1232.0 111.0)"><path d="M-9-2l10-9q7 3 9 10l-9 10q-7-3-10-11z" fill="#f8e8d8" stroke="#e07850" stroke-width="0.9"/><path d="M-5-5l10 11M-1-8l10 10M-6 2l8-9M-2 6l9-9" fill="none" stroke="#e8a888" stroke-width="0.7"/><path d="M-10-6l5-4" fill="none" stroke="#f09838" stroke-width="2"/><path d="M5 10l5-4" fill="none" stroke="#f09838" stroke-width="2"/></g><g transform="translate(1264.5 111.0)"><circle cx="-2" cy="-5" r="5.500" fill="#fdfdfd" stroke="#3a3a3a" stroke-width="1.200"/><path d="M-2-5l3-3" fill="none" stroke="#3a3a3a" stroke-width="1"/><path d="M3 3l7-4 2 3-7 4z" fill="#e8e8f0" stroke="#3a3a3a" stroke-width="1"/><path d="M-10 5q5-4 9 4" fill="none" stroke="#d04040" stroke-width="1.2"/><path d="M-11 4l-1 5M-3 7l3 3" fill="none" stroke="#3a9a4a" stroke-width="1.6"/></g><g transform="translate(1295.0 111.0)"><path d="M-9-3l8-7 6 1-1 8-6 7z" fill="#e0e4e4" stroke="#8a9090" stroke-width="0.8"/><path d="M-11 9q6-8 20-7l-6 5q-8 0-14 2z" fill="#c8d4f0" stroke="#7a88b8" stroke-width="0.8"/></g><g transform="translate(1325.5 111.0)"><path d="M-9 3l15-8q5 0 5 5l-15 9q-5-1-5-6z" fill="#8a9ae0" stroke="#5a68b8" stroke-width="0.7"/><path d="M-5 1q3 2 2 7M0-2q3 2 2 7M5-4q3 2 2 7" fill="none" stroke="#d8c8b0" stroke-width="1.6"/><rect x="-9" y="-8" width="4" height="10" rx="1" fill="#f09848" stroke="#c06818" stroke-width=".6"/><ellipse cx="-6" cy="5" rx="4" ry="4" fill="#a8b8f0"/></g><g transform="translate(1357.8 111.0)"><path d="M-10-5q5-5 10-3t9-3q4 4 2 10q-4 4-8 1t-10 3z" fill="#d8dcdc" stroke="#8a9090" stroke-width="0.8"/><path d="M-7 3q4-2 8 0l-5 7-4 0z" fill="#4a48b8"/><path d="M-5 4l4 5M-2 3l2 5" fill="none" stroke="#c8c8f8" stroke-width="0.7"/></g><path d="M1376.3 109.2h6l-3 3.600z" fill="#111"/><path d="M1387.0 115.2h6l-3 3.600z" fill="#111"/><path d="M1398.5 96V128" stroke="#e4e7e4" stroke-width="1"/></svg>
<!-- p1b_toolbars -->
<svg style="left:0;top:0;filter:blur(.4px)" width="1920" height="230" viewBox="0 0 1920 230"><rect x="6.8" y="132" width="1.600" height="1.600" fill="#9aa09c"/><rect x="7.8" y="135" width="1.600" height="1.600" fill="#9aa09c"/><rect x="6.8" y="138" width="1.600" height="1.600" fill="#9aa09c"/><rect x="7.8" y="141" width="1.600" height="1.600" fill="#9aa09c"/><rect x="6.8" y="144" width="1.600" height="1.600" fill="#9aa09c"/><rect x="7.8" y="147" width="1.600" height="1.600" fill="#9aa09c"/><rect x="6.8" y="150" width="1.600" height="1.600" fill="#9aa09c"/><rect x="7.8" y="153" width="1.600" height="1.600" fill="#9aa09c"/><rect x="6.8" y="156" width="1.600" height="1.600" fill="#9aa09c"/><g transform="translate(27.5 145.0)"><rect x="-2" y="-9" width="12" height="11" fill="#fdfdfd" stroke="#c84848" stroke-width="1.200"/><rect x="1" y="-6" width="6" height="5" fill="none" stroke="#555" stroke-width=".8" stroke-dasharray="1 1"/><rect x="-10" y="-1" width="12" height="11" fill="#fdfdfd" stroke="#4a4a4a" stroke-width="1.200"/><rect x="-7" y="2" width="6" height="5" fill="#f0b070" stroke="#c84848" stroke-width="1"/><rect x="-3" y="-10" width="2.400" height="2.400" fill="#c84848"/><rect x="9" y="-10" width="2.400" height="2.400" fill="#c84848"/><rect x="9" y="1" width="2.400" height="2.400" fill="#c84848"/><rect x="-11" y="-2" width="2.400" height="2.400" fill="#4a4a4a"/><rect x="1" y="-2" width="2.400" height="2.400" fill="#4a4a4a"/><rect x="-11" y="9" width="2.400" height="2.400" fill="#4a4a4a"/><rect x="1" y="9" width="2.400" height="2.400" fill="#4a4a4a"/></g><g transform="translate(58.0 146.0)"><path d="M-11 6l11-4 11 4-11 4z" fill="#b8d0b0" stroke="#5a7a5a" stroke-width="0.8"/><path d="M-11 2l11-4 11 4-11 4z" fill="#b8d0b0" stroke="#5a7a5a" stroke-width="0.8"/><path d="M-11 -2l11-4 11 4-11 4z" fill="#b8d0b0" stroke="#5a7a5a" stroke-width="0.8"/><path d="M-11 -6l11-4 11 4-11 4z" fill="#b8d0b0" stroke="#5a7a5a" stroke-width="0.8"/><rect x="-1.500" y="-2" width="3" height="3" fill="#4a5a4a"/></g><g transform="translate(89.8 146.0)"><path d="M-11 5l10-4 10 4-10 4z" fill="#c8d4c8" stroke="#6a7a6a" stroke-width="0.7"/><path d="M-11 1l10-4 10 4-10 4z" fill="#c8d4c8" stroke="#6a7a6a" stroke-width="0.7"/><path d="M-11 -3l10-4 10 4-10 4z" fill="#c8d4c8" stroke="#6a7a6a" stroke-width="0.7"/><path d="M-11 -7l10-4 10 4-10 4z" fill="#c8d4c8" stroke="#6a7a6a" stroke-width="0.7"/><rect x="-2" y="-4" width="12" height="15" fill="#dcdcf4" stroke="#7a7ab0" stroke-width=".8"/><path d="M0 0h2M4 0h4M0 3.500h2M4 3.500h4M0 7h2M4 7h4" fill="none" stroke="#6a6aa0" stroke-width="1"/></g><path d="M107.4 132V160" stroke="#d9dcd9" stroke-width="1"/><g transform="translate(126.0 146.0)"><path d="M-10-4l14-4 4 3 1 8-15 4z" fill="#f0e098" stroke="#c0b060" stroke-width="0.8"/><path d="M-7-1l9-2M-6 2l9-2M-6 5l9-2" fill="none" stroke="#c8b870" stroke-width="0.9"/><path d="M7-4q5 1 3 7" fill="none" stroke="#b89868" stroke-width="1"/></g><path d="M144.0 132V160" stroke="#d9dcd9" stroke-width="1"/><g transform="translate(162.4 145.0)"><path d="M-3-10l5-2 4 2v9l6 2v7l-9 3-6-3z" fill="#3a68d0" stroke="#2a48a0" stroke-width="0.7"/><path d="M-3-10l5 2v14l-5-2zM2 6l6-2 4 2-6 3z" fill="#6a98f0"/><path d="M-9.6 5.0l2.7 3.6l5.4 -8.1" fill="none" stroke="#2aa840" stroke-width="2.7" stroke-linecap="round"/></g><g transform="translate(193.3 145.0)"><path d="M-2-11l8-1 2 8 6 1-2 8-14 2z" fill="#f0f0fc" stroke="#5a5a98" stroke-width="1"/><path d="M-8 3l14 6" fill="none" stroke="#b8b890" stroke-width="3"/><path d="M-9.6 5.0l2.7 3.6l5.4 -8.1" fill="none" stroke="#2aa840" stroke-width="2.7" stroke-linecap="round"/></g><g transform="translate(225.0 145.0)"><g transform="translate(5 -1)"><path d="M0 -9.0L9.0 -4.0L0 0.9L-9.0 -4.0Z" fill="#f8e088" stroke="#c08818" stroke-width="0.5" stroke-linejoin="round"/><path d="M-9.0 -4.0L0 0.9L0 9.0L-9.0 4.0Z" fill="#f0b840" stroke="#c08818" stroke-width="0.5" stroke-linejoin="round"/><path d="M9.0 -4.0L0 0.9L0 9.0L9.0 4.0Z" fill="#e8a020" stroke="#c08818" stroke-width="0.5" stroke-linejoin="round"/></g><path d="M-8-8l5-2 3 1v12l-5 2-3-1z" fill="#8aa8f0" stroke="#4a68c0" stroke-width="0.7"/><path d="M-9.6 6.0l2.7 3.6l5.4 -8.1" fill="none" stroke="#2aa840" stroke-width="2.7" stroke-linecap="round"/></g><path d="M243.0 132V160" stroke="#d9dcd9" stroke-width="1"/><g transform="translate(261.6 145.0)"><g transform="translate(-2 -4)"><path d="M0 -7.0L7.0 -3.1L0 0.7L-7.0 -3.1Z" fill="#f8f0a0" stroke="#b8a838" stroke-width="0.5" stroke-linejoin="round"/><path d="M-7.0 -3.1L0 0.7L0 7.0L-7.0 3.1Z" fill="#f0e070" stroke="#b8a838" stroke-width="0.5" stroke-linejoin="round"/><path d="M7.0 -3.1L0 0.7L0 7.0L7.0 3.1Z" fill="#e0c850" stroke="#b8a838" stroke-width="0.5" stroke-linejoin="round"/></g><path d="M2 2l8-9 2 2-8 9z" fill="#f0a040" stroke="#c04020" stroke-width="0.6"/><rect x="-9" y="3" width="14" height="7" fill="#f4f4fc" stroke="#3a3a80" stroke-width="1"/><text x="-2.0" y="9.0" font-size="5.5" fill="#3a3a80" font-weight="bold" text-anchor="middle" font-family="Liberation Sans,Noto Sans CJK SC,sans-serif">ABC</text><path d="M7 2l5 4-5 4z" fill="#b040b0"/></g><path d="M280.0 148.9h6l-3 3.600z" fill="#111"/><path d="M291.0 130V162" stroke="#e4e7e4" stroke-width="1"/><rect x="294.8" y="132" width="1.600" height="1.600" fill="#9aa09c"/><rect x="295.8" y="135" width="1.600" height="1.600" fill="#9aa09c"/><rect x="294.8" y="138" width="1.600" height="1.600" fill="#9aa09c"/><rect x="295.8" y="141" width="1.600" height="1.600" fill="#9aa09c"/><rect x="294.8" y="144" width="1.600" height="1.600" fill="#9aa09c"/><rect x="295.8" y="147" width="1.600" height="1.600" fill="#9aa09c"/><rect x="294.8" y="150" width="1.600" height="1.600" fill="#9aa09c"/><rect x="295.8" y="153" width="1.600" height="1.600" fill="#9aa09c"/><rect x="294.8" y="156" width="1.600" height="1.600" fill="#9aa09c"/><g transform="translate(315.0 146.0)"><path d="M-11 3h6l6-10h4l4 10h2" fill="none" stroke="#2a2a2a" stroke-width="1.2"/><path d="M-5 5l6-10h4l-6 10zM5-5l4 10h-4l-4-8z" fill="#c8ccc8" stroke="#6a6a6a" stroke-width="0.7"/><path d="M-11 6h22" fill="none" stroke="#8a8a8a" stroke-width="0.8"/></g><g transform="translate(345.8 146.0)"><path d="M-11-2l6 6 5-8 5 2 6-3" fill="none" stroke="#2a2a2a" stroke-width="1"/><path d="M-10 0l5 9 6-2 9-8-4-5-7 1z" fill="#d0d4d0" stroke="#6a6a6a" stroke-width="0.8"/><path d="M-5 9l5-13 6 3" fill="none" stroke="#6a6a6a" stroke-width="0.8"/><path d="M-11 8q10 5 22-3" fill="none" stroke="#9a9a9a" stroke-width="0.8"/></g><g transform="translate(377.6 146.0)"><path d="M-10-10h6M-10-6h4M-10-2h4M-10 2h4M-10 6h4M-10 10h6" fill="none" stroke="#1a1a1a" stroke-width="1.4"/><rect x="-10" y="-3" width="4" height="3" fill="#c83838"/><path d="M-4-2l8-2 3 2v6l-6 1z" fill="#f0d0a8" stroke="#a88860" stroke-width="0.7"/><rect x="5" y="-1" width="5" height="7" fill="#6a68c0"/></g><path d="M395.0 148.9h6l-3 3.600z" fill="#111"/><path d="M406.0 130V162" stroke="#e4e7e4" stroke-width="1"/><rect x="409.8" y="132" width="1.600" height="1.600" fill="#9aa09c"/><rect x="410.8" y="135" width="1.600" height="1.600" fill="#9aa09c"/><rect x="409.8" y="138" width="1.600" height="1.600" fill="#9aa09c"/><rect x="410.8" y="141" width="1.600" height="1.600" fill="#9aa09c"/><rect x="409.8" y="144" width="1.600" height="1.600" fill="#9aa09c"/><rect x="410.8" y="147" width="1.600" height="1.600" fill="#9aa09c"/><rect x="409.8" y="150" width="1.600" height="1.600" fill="#9aa09c"/><rect x="410.8" y="153" width="1.600" height="1.600" fill="#9aa09c"/><rect x="409.8" y="156" width="1.600" height="1.600" fill="#9aa09c"/><g transform="translate(430.5 146.0)"><ellipse cx="0" cy="-8" rx="7" ry="2.200" fill="none" stroke="#4a50b8" stroke-width="1.300"/><ellipse cx="0" cy="-6" rx="7" ry="2.200" fill="none" stroke="#4a50b8" stroke-width="1.300"/><ellipse cx="0" cy="-4" rx="7" ry="2.200" fill="none" stroke="#4a50b8" stroke-width="1.300"/><ellipse cx="0" cy="-2" rx="7" ry="2.200" fill="none" stroke="#4a50b8" stroke-width="1.300"/><ellipse cx="0" cy="0" rx="7" ry="2.200" fill="none" stroke="#4a50b8" stroke-width="1.300"/><ellipse cx="0" cy="2" rx="7" ry="2.200" fill="none" stroke="#4a50b8" stroke-width="1.300"/><ellipse cx="0" cy="4" rx="7" ry="2.200" fill="none" stroke="#4a50b8" stroke-width="1.300"/><ellipse cx="0" cy="6" rx="7" ry="2.200" fill="none" stroke="#4a50b8" stroke-width="1.300"/><ellipse cx="0" cy="8" rx="7" ry="2.200" fill="none" stroke="#4a50b8" stroke-width="1.300"/></g><g transform="translate(462.0 146.0)"><g transform="rotate(-25)"><ellipse cx="0" cy="-6" rx="4" ry="1.800" fill="none" stroke="#5a60c0" stroke-width="1.300"/><ellipse cx="0" cy="-4" rx="4" ry="1.800" fill="none" stroke="#5a60c0" stroke-width="1.300"/><ellipse cx="0" cy="-2" rx="4" ry="1.800" fill="none" stroke="#5a60c0" stroke-width="1.300"/><ellipse cx="0" cy="0" rx="4" ry="1.800" fill="none" stroke="#5a60c0" stroke-width="1.300"/><ellipse cx="0" cy="2" rx="4" ry="1.800" fill="none" stroke="#5a60c0" stroke-width="1.300"/><ellipse cx="0" cy="4" rx="4" ry="1.800" fill="none" stroke="#5a60c0" stroke-width="1.300"/><ellipse cx="0" cy="6" rx="4" ry="1.800" fill="none" stroke="#5a60c0" stroke-width="1.300"/><path d="M0-7v-3a2.500 2.500 0 1 1-3 2M0 7v3a2.500 2.500 0 1 0 3-2" fill="none" stroke="#6a6a78" stroke-width="1.1"/></g></g><g transform="translate(492.0 146.0)"><ellipse cx="1" cy="0" rx="8" ry="10.500" fill="#f0d838" stroke="#b8a020" stroke-width=".8"/><ellipse cx="-1.500" cy="0" rx="7" ry="10" fill="#f8e860" stroke="#c8b030" stroke-width=".6"/><ellipse cx="-2" cy="0" rx="2.800" ry="4.500" fill="#d8c020" stroke="#8a7818" stroke-width=".8"/><path d="M2-10q4 4 4 10t-4 10" fill="none" stroke="#6a9a40" stroke-width="1"/></g><path d="M510.0 132V160" stroke="#d9dcd9" stroke-width="1"/><g transform="translate(529.0 146.0)"><path d="M-9-10l14 14M5-10l-13 13" fill="none" stroke="#4a5a5a" stroke-width="1.8"/><ellipse cx="-3" cy="3" rx="3.500" ry="6" fill="none" stroke="#6a70c8" stroke-width="1.300" transform="rotate(-20 -3 3)"/><ellipse cx="1" cy="3" rx="3.500" ry="6" fill="none" stroke="#6a70c8" stroke-width="1.300" transform="rotate(-20 1 3)"/><ellipse cx="5" cy="3" rx="3.500" ry="6" fill="none" stroke="#6a70c8" stroke-width="1.300" transform="rotate(-20 5 3)"/><ellipse cx="9" cy="3" rx="3.500" ry="6" fill="none" stroke="#6a70c8" stroke-width="1.300" transform="rotate(-20 9 3)"/></g><path d="M547.0 148.9h6l-3 3.600z" fill="#111"/><path d="M558.0 130V162" stroke="#e4e7e4" stroke-width="1"/><rect x="655.3" y="132" width="1.600" height="1.600" fill="#9aa09c"/><rect x="656.3" y="135" width="1.600" height="1.600" fill="#9aa09c"/><rect x="655.3" y="138" width="1.600" height="1.600" fill="#9aa09c"/><rect x="656.3" y="141" width="1.600" height="1.600" fill="#9aa09c"/><rect x="655.3" y="144" width="1.600" height="1.600" fill="#9aa09c"/><rect x="656.3" y="147" width="1.600" height="1.600" fill="#9aa09c"/><rect x="655.3" y="150" width="1.600" height="1.600" fill="#9aa09c"/><rect x="656.3" y="153" width="1.600" height="1.600" fill="#9aa09c"/><rect x="655.3" y="156" width="1.600" height="1.600" fill="#9aa09c"/><g transform="translate(675.6 146.0)"><path d="M0-9l10 17h-20z" fill="#fdfdfd" stroke="#3a3a3a" stroke-width="1.3"/></g><g transform="translate(705.4 146.0)"><rect x="-10" y="-10" width="20" height="18" fill="#fdfdfd" stroke="#7a7aa0" stroke-width=".8"/><rect x="-10" y="-10" width="20" height="3.500" fill="#6a50c0"/><path d="M-10-3h20M-10 1h20M-10 5h20M-5-6v14M0-6v14M5-6v14" fill="none" stroke="#9a9ab0" stroke-width="0.6"/><path d="M5 2l5 9h-10z" fill="#fce8f0" stroke="#d04868" stroke-width="1.3"/></g><g transform="translate(736.0 146.0)"><path d="M-11-8h7l2 2h10l-2 4-3 12h-14z" fill="#f0e0a0" stroke="#c8b870" stroke-width="0.8"/><path d="M-7 4h7M-3.500 0v8M1-5h7M4.500-9v8M3 8h7M6.500 4v8" fill="none" stroke="#d03828" stroke-width="1.3"/><path d="M3 8h7M6.500 4v8" fill="none" stroke="#2a2a2a" stroke-width="1.3"/></g><g transform="translate(767.3 146.0)"><path d="M-11-8h7l2 2h10l-2 4-3 12h-14z" fill="#f0e0a0" stroke="#c8b870" stroke-width="0.8"/><circle cx="4" cy="-4" r="3.500" fill="none" stroke="#3a3a3a" stroke-width="1.200"/><circle cx="-3" cy="5" r="3.500" fill="none" stroke="#3a3a3a" stroke-width="1.200"/><circle cx="7" cy="7" r="3.500" fill="#fdfdfd" stroke="#3a3a3a" stroke-width="1.200"/></g><rect x="788.500" y="134.500" width="20" height="20" fill="#e8eee8" stroke="#2a2a2a" stroke-width="1.300"/><path d="M791 146h12M791 149h9M791 152h11" fill="none" stroke="#3a3a3a" stroke-width="1"/><g transform="translate(829.8 146.0)"><path d="M-10 1v8M10 1v8M-9 5h18" fill="none" stroke="#b83858" stroke-width="1.2"/><path d="M-9 5l4-2v4zM9 5l-4-2v4z" fill="#b83858"/><path d="M-4-2l7-8 3 2-5 8z" fill="#d8d8a8" stroke="#8a8a68" stroke-width="0.7"/><path d="M3-10l4-2 2 3-3 1z" fill="#7a7a88"/></g><path d="M848.0 132V160" stroke="#d9dcd9" stroke-width="1"/><g transform="translate(867.4 146.0)"><circle cx="-5" cy="-5" r="3.500" fill="#3a3a48"/><circle cx="5" cy="-4" r="4" fill="#3a3a58"/><circle cx="5" cy="-4" r="2" fill="#8a8ad8"/><path d="M-8-9l4-2 4 2M2-9l4-2 3 2" fill="none" stroke="#4a4a58" stroke-width="2"/><text x="0.0" y="10.0" font-size="10" fill="#2a2a2a" font-weight="bold" text-anchor="middle" font-family="Liberation Sans,Noto Sans CJK SC,sans-serif" letter-spacing="-0.600">10H7</text></g><path d="M885.4 149.2h6l-3 3.600z" fill="#111"/><path d="M896.5 130V162" stroke="#e4e7e4" stroke-width="1"/><rect x="899.8" y="132" width="1.600" height="1.600" fill="#9aa09c"/><rect x="900.8" y="135" width="1.600" height="1.600" fill="#9aa09c"/><rect x="899.8" y="138" width="1.600" height="1.600" fill="#9aa09c"/><rect x="900.8" y="141" width="1.600" height="1.600" fill="#9aa09c"/><rect x="899.8" y="144" width="1.600" height="1.600" fill="#9aa09c"/><rect x="900.8" y="147" width="1.600" height="1.600" fill="#9aa09c"/><rect x="899.8" y="150" width="1.600" height="1.600" fill="#9aa09c"/><rect x="900.8" y="153" width="1.600" height="1.600" fill="#9aa09c"/><rect x="899.8" y="156" width="1.600" height="1.600" fill="#9aa09c"/><g transform="translate(920.3 146.0)"><g transform="translate(-2 -3)"><path d="M0 -7.0L7.0 -3.1L0 0.7L-7.0 -3.1Z" fill="#f8f0a0" stroke="#b0a030" stroke-width="0.6" stroke-linejoin="round"/><path d="M-7.0 -3.1L0 0.7L0 7.0L-7.0 3.1Z" fill="#f0e068" stroke="#b0a030" stroke-width="0.6" stroke-linejoin="round"/><path d="M7.0 -3.1L0 0.7L0 7.0L7.0 3.1Z" fill="#d8c040" stroke="#b0a030" stroke-width="0.6" stroke-linejoin="round"/></g><g transform="translate(-5 5)"><path d="M0 -5.0L5.0 -2.2L0 0.5L-5.0 -2.2Z" fill="#f8f0a0" stroke="#b0a030" stroke-width="0.6" stroke-linejoin="round"/><path d="M-5.0 -2.2L0 0.5L0 5.0L-5.0 2.2Z" fill="#f0e068" stroke="#b0a030" stroke-width="0.6" stroke-linejoin="round"/><path d="M5.0 -2.2L0 0.5L0 5.0L5.0 2.2Z" fill="#d8c040" stroke="#b0a030" stroke-width="0.6" stroke-linejoin="round"/></g><g transform="translate(5 5)"><path d="M0 -5.0L5.0 -2.2L0 0.5L-5.0 -2.2Z" fill="#f8f0a0" stroke="#b0a030" stroke-width="0.6" stroke-linejoin="round"/><path d="M-5.0 -2.2L0 0.5L0 5.0L-5.0 2.2Z" fill="#f0e068" stroke="#b0a030" stroke-width="0.6" stroke-linejoin="round"/><path d="M5.0 -2.2L0 0.5L0 5.0L5.0 2.2Z" fill="#d8c040" stroke="#b0a030" stroke-width="0.6" stroke-linejoin="round"/></g><path d="M-6 2a2 2 0 0 1 4 0v3h-4z" fill="none" stroke="#a89020" stroke-width="0.8"/></g><g transform="translate(951.3 146.0)"><g transform="translate(-1 -3)"><path d="M0 -7.0L7.0 -3.1L0 0.7L-7.0 -3.1Z" fill="#f8f0a0" stroke="#b0a030" stroke-width="0.6" stroke-linejoin="round"/><path d="M-7.0 -3.1L0 0.7L0 7.0L-7.0 3.1Z" fill="#f0e068" stroke="#b0a030" stroke-width="0.6" stroke-linejoin="round"/><path d="M7.0 -3.1L0 0.7L0 7.0L7.0 3.1Z" fill="#d8c040" stroke="#b0a030" stroke-width="0.6" stroke-linejoin="round"/></g><g transform="translate(-5 5)"><path d="M0 -5.0L5.0 -2.2L0 0.5L-5.0 -2.2Z" fill="#f8f0a0" stroke="#b0a030" stroke-width="0.6" stroke-linejoin="round"/><path d="M-5.0 -2.2L0 0.5L0 5.0L-5.0 2.2Z" fill="#f0e068" stroke="#b0a030" stroke-width="0.6" stroke-linejoin="round"/><path d="M5.0 -2.2L0 0.5L0 5.0L5.0 2.2Z" fill="#d8c040" stroke="#b0a030" stroke-width="0.6" stroke-linejoin="round"/></g><g transform="translate(5 5)"><path d="M0 -5.0L5.0 -2.2L0 0.5L-5.0 -2.2Z" fill="#f8f0a0" stroke="#b0a030" stroke-width="0.6" stroke-linejoin="round"/><path d="M-5.0 -2.2L0 0.5L0 5.0L-5.0 2.2Z" fill="#f0e068" stroke="#b0a030" stroke-width="0.6" stroke-linejoin="round"/><path d="M5.0 -2.2L0 0.5L0 5.0L5.0 2.2Z" fill="#d8c040" stroke="#b0a030" stroke-width="0.6" stroke-linejoin="round"/></g><path d="M0 1a2 2 0 0 1 4 0v3h-4z" fill="none" stroke="#a89020" stroke-width="0.8"/></g><path d="M969.4 149.2h6l-3 3.600z" fill="#111"/><path d="M980.0 130V162" stroke="#e4e7e4" stroke-width="1"/><rect x="6.8" y="166" width="1.600" height="1.600" fill="#9aa09c"/><rect x="7.8" y="169" width="1.600" height="1.600" fill="#9aa09c"/><rect x="6.8" y="172" width="1.600" height="1.600" fill="#9aa09c"/><rect x="7.8" y="175" width="1.600" height="1.600" fill="#9aa09c"/><rect x="6.8" y="178" width="1.600" height="1.600" fill="#9aa09c"/><rect x="7.8" y="181" width="1.600" height="1.600" fill="#9aa09c"/><rect x="6.8" y="184" width="1.600" height="1.600" fill="#9aa09c"/><rect x="7.8" y="187" width="1.600" height="1.600" fill="#9aa09c"/><rect x="6.8" y="190" width="1.600" height="1.600" fill="#9aa09c"/><g transform="translate(27.0 180.0)"><g transform="translate(-5 -6) scale(.72)"><path d="M-5-6h2v-3h2v3h3v-3h2v3h2v7l-3 3v4h-4v-4l-4-3z" fill="#9a84d0" stroke="#6a58a8" stroke-width="0.6"/></g><path d="M-4.4 5.0l4.1 5.4l8.1 -12.2" fill="none" stroke="#2aa840" stroke-width="4.1" stroke-linecap="round"/></g><g transform="translate(58.0 180.0)"><g transform="translate(1 -5) scale(.7)"><path d="M-5-6h2v-3h2v3h3v-3h2v3h2v7l-3 3v4h-4v-4l-4-3z" fill="#9a84d0" stroke="#6a58a8" stroke-width="0.6"/></g><rect x="1" y="0" width="11" height="11" fill="#dcdcf0" stroke="#8a8ab0" stroke-width=".7"/><path d="M3 3h7M3 6h7M3 9h5" stroke="#9a9ac0" stroke-width=".8"/><path d="M-11-4h4v4h-4zM-11 3h4v4h-4zM-9 0v3M-7 5h4" fill="#fdfdfd" stroke="#8a8a8a" stroke-width="0.8"/></g><g transform="translate(89.0 180.0)"><rect x="-11" y="-10" width="21" height="17" fill="#fdfdfd" stroke="#6a6a6a" stroke-width=".8"/><path d="M-11-6h21M-11-2h21M-11 2h21M-4-10v17M3-10v17" fill="none" stroke="#7a7a7a" stroke-width="0.7"/><rect x="-11" y="4" width="14" height="3" fill="#e8e858"/><g transform="translate(6 5) scale(.65)"><path d="M-5-6h2v-3h2v3h3v-3h2v3h2v7l-3 3v4h-4v-4l-4-3z" fill="#9a84d0" stroke="#6a58a8" stroke-width="0.6"/></g></g><g transform="translate(119.8 180.0)"><path d="M-9-8v12l12 6 8-7M-9 4l10-6 6 3M1-2v12" fill="none" stroke="#5a5a5a" stroke-width="1"/><path d="M-9-8v-3" fill="none" stroke="#3838c0" stroke-width="1.4"/><path d="M-11-7l2-4 2 4z" fill="#3838c0"/><path d="M10 1l4-3" fill="none" stroke="#2a8a3a" stroke-width="1.3"/><path d="M2 10l6 2" fill="none" stroke="#d03030" stroke-width="1.4"/></g><path d="M138.3 182.9h6l-3 3.600z" fill="#111"/><path d="M149.0 164V196" stroke="#e4e7e4" stroke-width="1"/><rect x="152.8" y="166" width="1.600" height="1.600" fill="#9aa09c"/><rect x="153.8" y="169" width="1.600" height="1.600" fill="#9aa09c"/><rect x="152.8" y="172" width="1.600" height="1.600" fill="#9aa09c"/><rect x="153.8" y="175" width="1.600" height="1.600" fill="#9aa09c"/><rect x="152.8" y="178" width="1.600" height="1.600" fill="#9aa09c"/><rect x="153.8" y="181" width="1.600" height="1.600" fill="#9aa09c"/><rect x="152.8" y="184" width="1.600" height="1.600" fill="#9aa09c"/><rect x="153.8" y="187" width="1.600" height="1.600" fill="#9aa09c"/><rect x="152.8" y="190" width="1.600" height="1.600" fill="#9aa09c"/><g transform="translate(173.0 180.0)"><path d="M-6 6v-8h6v-7h7v15z" fill="#e8e8e4" stroke="#5a5a5a" stroke-width="1.2"/><path d="M-10-2v8M-11-2h2M-11 6h2M-6 10h13M-6 9v2M7 9v2M0-11h7M0-12v2M7-12v2M10-9v15M9-9h2M9 6h2" fill="none" stroke="#c83838" stroke-width="1"/></g><path d="M191.6 166V194" stroke="#d9dcd9" stroke-width="1"/><text x="211.0" y="184.5" font-size="13.5" fill="#222" font-weight="bold" text-anchor="middle" font-family="Liberation Sans,Noto Sans CJK SC,sans-serif">X.X</text><text x="242.0" y="177.0" font-size="12" fill="#222" font-weight="normal" text-anchor="middle" font-family="Liberation Sans,Noto Sans CJK SC,sans-serif" letter-spacing="-0.500" stroke="#222" stroke-width=".3">1.00</text><text x="242.0" y="186.5" font-size="9" fill="#a02840" font-weight="bold" text-anchor="middle" font-family="Liberation Sans,Noto Sans CJK SC,sans-serif">±.05</text><text x="272.8" y="177.0" font-size="12" fill="#222" font-weight="normal" text-anchor="middle" font-family="Liberation Sans,Noto Sans CJK SC,sans-serif" letter-spacing="-0.500" stroke="#222" stroke-width=".3">1.00</text><text x="273.8" y="184.0" font-size="8" fill="#a02840" font-weight="bold" text-anchor="middle" font-family="Liberation Sans,Noto Sans CJK SC,sans-serif">+.05</text><text x="273.8" y="191.0" font-size="8" fill="#a02840" font-weight="bold" text-anchor="middle" font-family="Liberation Sans,Noto Sans CJK SC,sans-serif">−.02</text><text x="303.7" y="177.0" font-size="12" fill="#222" font-weight="normal" text-anchor="middle" font-family="Liberation Sans,Noto Sans CJK SC,sans-serif" letter-spacing="-0.500" stroke="#222" stroke-width=".3">1.00</text><text x="304.7" y="184.0" font-size="8" fill="#4a4a4a" font-weight="bold" text-anchor="middle" font-family="Liberation Sans,Noto Sans CJK SC,sans-serif">+.05</text><text x="304.7" y="191.0" font-size="8" fill="#a8aaa8" font-weight="bold" text-anchor="middle" font-family="Liberation Sans,Noto Sans CJK SC,sans-serif">−.00</text><text x="334.5" y="177.0" font-size="12" fill="#222" font-weight="normal" text-anchor="middle" font-family="Liberation Sans,Noto Sans CJK SC,sans-serif" letter-spacing="-0.500" stroke="#222" stroke-width=".3">1.00</text><text x="335.5" y="184.0" font-size="8" fill="#a8aaa8" font-weight="bold" text-anchor="middle" font-family="Liberation Sans,Noto Sans CJK SC,sans-serif">+.00</text><text x="335.5" y="191.0" font-size="8" fill="#a02840" font-weight="bold" text-anchor="middle" font-family="Liberation Sans,Noto Sans CJK SC,sans-serif">−.02</text><rect x="354.500" y="173.500" width="22" height="12" fill="none" stroke="#b83848" stroke-width="1.200"/><text x="365.5" y="184.0" font-size="12" fill="#222" font-weight="bold" text-anchor="middle" font-family="Liberation Sans,Noto Sans CJK SC,sans-serif">X.X</text><text x="396.0" y="184.0" font-size="12" fill="#222" font-weight="bold" text-anchor="middle" font-family="Liberation Sans,Noto Sans CJK SC,sans-serif">X.X</text><text x="385.0" y="184.0" font-size="13" fill="#b83848" font-weight="normal" text-anchor="middle" font-family="Liberation Sans,Noto Sans CJK SC,sans-serif">(</text><text x="407.0" y="184.0" font-size="13" fill="#b83848" font-weight="normal" text-anchor="middle" font-family="Liberation Sans,Noto Sans CJK SC,sans-serif">)</text><text x="427.0" y="184.0" font-size="12" fill="#4040a0" font-weight="normal" text-anchor="middle" font-family="Liberation Sans,Noto Sans CJK SC,sans-serif" letter-spacing="-0.600" stroke="#4040a0" stroke-width=".3">10H7</text><text x="458.3" y="176.0" font-size="11" fill="#4040a0" font-weight="normal" text-anchor="middle" font-family="Liberation Sans,Noto Sans CJK SC,sans-serif" letter-spacing="-0.600" stroke="#4040a0" stroke-width=".3">10H7</text><text x="459.3" y="184.0" font-size="7.5" fill="#4040a0" font-weight="normal" text-anchor="middle" font-family="Liberation Sans,Noto Sans CJK SC,sans-serif">10.01</text><text x="453.3" y="190.5" font-size="7.5" fill="#4040a0" font-weight="normal" text-anchor="middle" font-family="Liberation Sans,Noto Sans CJK SC,sans-serif">10</text><path d="M447.3 178q-2 6 0 12M470.3 178q2 6 0 12" fill="none" stroke="#4040a0" stroke-width="0.8"/><text x="489.2" y="176.0" font-size="11" fill="#4040a0" font-weight="normal" text-anchor="middle" font-family="Liberation Sans,Noto Sans CJK SC,sans-serif" letter-spacing="-0.600" stroke="#4040a0" stroke-width=".3">10H7</text><text x="490.2" y="184.0" font-size="7.5" fill="#4040a0" font-weight="normal" text-anchor="middle" font-family="Liberation Sans,Noto Sans CJK SC,sans-serif">0.015</text><text x="484.2" y="190.5" font-size="7.5" fill="#4040a0" font-weight="normal" text-anchor="middle" font-family="Liberation Sans,Noto Sans CJK SC,sans-serif">0</text><path d="M478.2 178q-2 6 0 12M501.2 178q2 6 0 12" fill="none" stroke="#4040a0" stroke-width="0.8"/><text x="520.6" y="176.0" font-size="11" fill="#4040a0" font-weight="normal" text-anchor="middle" font-family="Liberation Sans,Noto Sans CJK SC,sans-serif" letter-spacing="-0.600" stroke="#4040a0" stroke-width=".3">10</text><text x="521.6" y="184.0" font-size="7.5" fill="#4040a0" font-weight="normal" text-anchor="middle" font-family="Liberation Sans,Noto Sans CJK SC,sans-serif">0.015</text><text x="515.6" y="190.5" font-size="7.5" fill="#4040a0" font-weight="normal" text-anchor="middle" font-family="Liberation Sans,Noto Sans CJK SC,sans-serif">0</text><path d="M509.6 178q-2 6 0 12M532.6 178q2 6 0 12" fill="none" stroke="#4040a0" stroke-width="0.8"/><path d="M538.5 166V194" stroke="#d9dcd9" stroke-width="1"/><g transform="translate(557.0 180.0)"><path d="M10-10l-18 18" fill="none" stroke="#c03048" stroke-width="1.2"/><path d="M-10 10l2-6 4 4z" fill="#c03048"/><text x="0.0" y="-1.0" font-size="7.5" fill="#c03048" font-weight="normal" text-anchor="middle" font-family="Liberation Sans,Noto Sans CJK SC,sans-serif" transform="rotate(-45 0 -1)">R(Ø)</text></g><g transform="translate(588.0 180.0)"><path d="M-10 7l8-8h13" fill="none" stroke="#c03048" stroke-width="1.2"/><path d="M-11 8l2-6 4 4z" fill="#c03048"/><text x="5.0" y="-3.0" font-size="7.5" fill="#c03048" font-weight="normal" text-anchor="middle" font-family="Liberation Sans,Noto Sans CJK SC,sans-serif">R(Ø)</text></g><path d="M606.4 166V194" stroke="#d9dcd9" stroke-width="1"/><g transform="translate(626.7 180.0)"><circle cx="-1" cy="1" r="7.500" fill="none" stroke="#3a3a3a" stroke-width="1.200"/><path d="M-6 6l15-15" fill="none" stroke="#3a3a3a" stroke-width="1"/><path d="M-6 6l1-4 3 3zM4-4l-1 4-3-3z" fill="#c03048"/></g><g transform="translate(656.0 180.0)"><circle cx="0" cy="0" r="7.500" fill="none" stroke="#3a3a3a" stroke-width="1.200"/><path d="M-11 11l22-22" fill="none" stroke="#c03048" stroke-width="1"/><path d="M-6 6l-1-4-3 3zM6-6l1 4 3-3z" fill="#c03048"/></g><g transform="translate(685.5 180.5)"><path d="M-8 1l6-6v3h6q4 0 4-4h1q2 10-5 10h-6v3z" fill="#48a8a8" stroke="#2a8088" stroke-width="0.6"/></g><path d="M705.4 182.9h6l-3 3.600z" fill="#111"/><path d="M716.5 164V196" stroke="#e4e7e4" stroke-width="1"/><rect x="9.5" y="201.500" width="132" height="19" fill="#fdfefd" stroke="#9a9d9a" stroke-width="1"/><text x="12.0" y="215.3" font-size="11" fill="#1a1a1a" font-weight="normal" text-anchor="start" font-family="Liberation Sans,Noto Sans CJK SC,sans-serif">无选择过滤器</text><path d="M129.1 209.500h7l-3.500 4z" fill="#111"/><rect x="149.5" y="201.500" width="139" height="19" fill="#fdfefd" stroke="#9a9d9a" stroke-width="1"/><text x="152.0" y="215.3" font-size="11" fill="#1a1a1a" font-weight="normal" text-anchor="start" font-family="Liberation Sans,Noto Sans CJK SC,sans-serif">整个装配</text><path d="M275.5 209.500h7l-3.500 4z" fill="#111"/><g transform="translate(304.0 211.0)"><path d="M-6-3l4-2 4 2v6l-4 2-4-2zM2-5l3-2 3 3-2 5" fill="none" stroke="#c6cac6" stroke-width="1.1"/></g><path d="M318.0 200V222" stroke="#d9dcd9" stroke-width="1"/><g transform="translate(332.0 211.0)"><path d="M-5-4h6l-2 3M1 1h5l-3 5z" fill="none" stroke="#c6cac6" stroke-width="1.2"/></g><rect x="345.500" y="204.500" width="15" height="14" fill="#fdfdfd" stroke="#b83848" stroke-width="1.300"/><path d="M348 208h5M350.500 205.500v5" fill="none" stroke="#2a2a2a" stroke-width="1.2"/><path d="M353 211h5l-2.500 4z" fill="#f09030"/><path d="M367.0 209.2h6l-3 3.600z" fill="#111"/><g transform="translate(387.0 211.0)"><path d="M-5-5a3 3 0 0 1 5 0M2 2h7M5.500-1.500v7" fill="none" stroke="#c6cac6" stroke-width="1.2"/></g><g transform="translate(410.0 211.0)"><path d="M-6-5h6l-2 3M3 0h3v6" fill="none" stroke="#c6cac6" stroke-width="1.3"/></g><path d="M424.0 200V222" stroke="#d9dcd9" stroke-width="1"/><g transform="translate(439.0 211.0)"><ellipse cx="-2" cy="-1" rx="5" ry="6.500" fill="none" stroke="#5a5a5a" stroke-width="1" stroke-dasharray="1.500 1.200"/><circle cx="4" cy="4" r="3.200" fill="none" stroke="#c02838" stroke-width="1.100"/><path d="M4-1v10M-1 4h10" fill="none" stroke="#c02838" stroke-width="1"/></g><g transform="translate(462.0 211.0)"><rect x="-7" y="-6" width="14" height="12" fill="none" stroke="#a83040" stroke-width="1.200" stroke-dasharray="2.500 1.500"/></g><path d="M477.4 209.2h6l-3 3.600z" fill="#111"/><path d="M488.6 200V222" stroke="#d9dcd9" stroke-width="1"/><g transform="translate(503.0 211.0)"><path d="M-8 1l5-6 10 1 1 6-5 5-10-1z" fill="#d8dcd8" stroke="#6a6e6a" stroke-width="0.9"/><path d="M-3-2l6 1" fill="none" stroke="#c83838" stroke-width="1.2"/></g><g transform="translate(526.0 211.0)"><path d="M0 -8.0L8.0 -3.6L0 0.8L-8.0 -3.6Z" fill="#d8e8f8" stroke="#8aa8d8" stroke-width="0.5" stroke-linejoin="round"/><path d="M-8.0 -3.6L0 0.8L0 8.0L-8.0 3.6Z" fill="#a8c0e8" stroke="#8aa8d8" stroke-width="0.5" stroke-linejoin="round"/><path d="M8.0 -3.6L0 0.8L0 8.0L8.0 3.6Z" fill="#7a98d8" stroke="#8aa8d8" stroke-width="0.5" stroke-linejoin="round"/></g><path d="M540.0 200V222" stroke="#d9dcd9" stroke-width="1"/><rect x="544.4" y="200.500" width="68.4" height="21.500" fill="#c9e3df"/><rect x="636.0" y="200.500" width="46.0" height="21.500" fill="#c9e3df"/><rect x="705.0" y="200.500" width="22.6" height="21.500" fill="#c9e3df"/><rect x="751.5" y="200.500" width="45.3" height="21.500" fill="#c9e3df"/><path d="M567.2 200.500v21.500" stroke="#b4d6d2" stroke-width="1"/><path d="M590.0 200.500v21.500" stroke="#b4d6d2" stroke-width="1"/><path d="M659.0 200.500v21.500" stroke="#b4d6d2" stroke-width="1"/><path d="M774.0 200.500v21.500" stroke="#b4d6d2" stroke-width="1"/><g transform="translate(555.5 211.0)"><path d="M-8-6l4 2.500-4 2.500z" fill="#28a048"/><path d="M-8 2l4 2.500-4 2.500z" fill="#d03838"/><path d="M2-5l6 5-6 5-6-5z" fill="#e8d848" stroke="#4a4a2a" stroke-width="0.6"/><circle cx="2" cy="-6" r="1.600" fill="#1a1a1a"/><circle cx="8" cy="0" r="1.600" fill="#1a1a1a"/><circle cx="2" cy="6" r="1.600" fill="#1a1a1a"/><circle cx="-3" cy="0" r="1.600" fill="#1a1a1a"/></g><g transform="translate(579.0 211.0)"><path d="M-6 6l11-11" fill="none" stroke="#2a2a2a" stroke-width="1.3"/><circle cx="6" cy="-6" r="1.800" fill="#c02838"/></g><g transform="translate(602.0 211.0)"><path d="M-7 6l13-12" fill="none" stroke="#2a2a2a" stroke-width="1.3"/><circle cx="0" cy="-0.500" r="1.800" fill="#c02838"/></g><g transform="translate(624.5 211.0)"><path d="M-6-7q5 0 5 6t6 7" fill="none" stroke="#7a2838" stroke-width="1.5"/></g><g transform="translate(648.0 211.0)"><path d="M-7 1l4-6 5 10 5-8" fill="none" stroke="#3838a8" stroke-width="1.5"/><circle cx="-7" cy="1" r="1.700" fill="#c02838"/><circle cx="-3" cy="-5" r="1.700" fill="#c02838"/><circle cx="2" cy="5" r="1.700" fill="#c02838"/><circle cx="7" cy="-3" r="1.700" fill="#c02838"/></g><g transform="translate(671.0 211.0)"><path d="M-8 3q4-9 8-2t8-3" fill="none" stroke="#7a2838" stroke-width="1.8"/></g><g transform="translate(693.7 211.0)"><path d="M0-8v14M-8 3q8-12 16 0" fill="none" stroke="#5a2030" stroke-width="1.3"/></g><g transform="translate(717.0 211.0)"><circle cx="0" cy="0" r="7.500" fill="none" stroke="#1a1a1a" stroke-width="1.300"/><circle cx="0" cy="0" r="1.800" fill="#c02838"/></g><g transform="translate(739.0 211.0)"><circle cx="0" cy="0" r="7" fill="none" stroke="#c02838" stroke-width="1.300"/><circle cx="0" cy="-7" r="1.600" fill="#c02838"/><circle cx="7" cy="0" r="1.600" fill="#c02838"/><circle cx="0" cy="7" r="1.600" fill="#c02838"/><circle cx="-7" cy="0" r="1.600" fill="#c02838"/></g><g transform="translate(763.0 211.0)"><path d="M0-7v14M-7 0h14" fill="none" stroke="#1a1a1a" stroke-width="1.5"/><circle cx="0" cy="0" r="1.200" fill="#c02838"/></g><g transform="translate(786.0 211.0)"><path d="M-6 7l12-13" fill="none" stroke="#2a2a2a" stroke-width="1.3"/><circle cx="-3" cy="3.500" r="1.800" fill="#c02838"/></g><g transform="translate(808.0 211.0)"><path d="M-7-5q7-4 14 0q-3 6-2 11q-5-2-8 0q-1-6-4-11z" fill="#c0d0f0" stroke="#8aa0d0" stroke-width="0.7"/><circle cx="2" cy="-2" r="1.600" fill="#c02838"/></g><g transform="translate(831.0 211.0)"><path d="M-8 1l7-6 9 3-7 7z" fill="#5a60b8" stroke="#3a4090" stroke-width="0.7"/><path d="M-4-2l8 4M-1-4l8 4M-5 3l6-6M-2 5l7-6" fill="none" stroke="#d0d4f8" stroke-width="0.7"/></g><path d="M845.0 200V222" stroke="#d9dcd9" stroke-width="1"/><g transform="translate(860.0 211.0)"><path d="M-5-7l10 3v11l-10-3zM-5-3.500l10 3M-5 0l10 3M-1.500-6v11M1.500-5v11" fill="none" stroke="#2a2a2a" stroke-width="1"/></g><path d="M1890.3 214.8h6l-3 3.600z" fill="#111"/></svg>
<!-- p2_nav -->
<div class="a" style="left:4px;top:225px;width:1898px;height:2px;background:linear-gradient(#b9bcba,#d9dcda)"></div>
<div class="a" style="left:5px;top:227px;width:31px;height:708px;background:linear-gradient(90deg,#dddfdd,#cccecc 40%,#d3d5d3)"></div>
<div class="a" style="left:36px;top:227px;width:2px;height:708px;background:#eef1ee"></div>
<div class="a" style="left:7px;top:351px;width:30px;height:44px;background:#fcfefb;border:1px solid #d2d5d2;border-right:none"></div>
<svg style="left:0;top:0" width="40" height="1072" viewBox="0 0 40 1072"><circle cx="19" cy="240" r="4" fill="none" stroke="#3c3c3c" stroke-width="1.500"/><path d="M23.5 240.0L25.3 240.0" stroke="#3c3c3c" stroke-width="1.600"/><path d="M22.2 243.2L23.5 244.5" stroke="#3c3c3c" stroke-width="1.600"/><path d="M19.0 244.5L19.0 246.3" stroke="#3c3c3c" stroke-width="1.600"/><path d="M15.8 243.2L14.5 244.5" stroke="#3c3c3c" stroke-width="1.600"/><path d="M14.5 240.0L12.7 240.0" stroke="#3c3c3c" stroke-width="1.600"/><path d="M15.8 236.8L14.5 235.5" stroke="#3c3c3c" stroke-width="1.600"/><path d="M19.0 235.5L19.0 233.7" stroke="#3c3c3c" stroke-width="1.600"/><path d="M22.2 236.8L23.5 235.5" stroke="#3c3c3c" stroke-width="1.600"/><path d="M15 281v22M15 293h7M23 288h9" stroke="#22228a" stroke-width="1.200" fill="none"/><rect x="12" y="279" width="8" height="8" rx="1" fill="#f0c838" stroke="#b08c10" stroke-width=".6"/><rect x="17" y="282" width="7" height="7" rx="1" fill="#f6dc60" stroke="#b08c10" stroke-width=".6"/><rect x="23" y="292" width="8" height="8" rx="1" fill="#f2cf48" stroke="#b08c10" stroke-width=".6"/><path d="M14 321l7 5-7 5zM29 321l-7 5 7 5z" fill="#1e2aa8"/><path d="M21.500 319v24" stroke="#222" stroke-width="1" stroke-dasharray="2 1.500"/><rect x="11" y="334" width="8" height="8" fill="#f4e23c" stroke="#6a6a20" stroke-width=".8"/><path d="M23 342v-9l9 9z" fill="#d62828"/><path d="M16 372v22M16 388h6M23 371h9" stroke="#22228a" stroke-width="1.200" fill="none"/><path d="M11 365v6a4 2 0 0 0 9 0v-6" fill="#d86ab0" stroke="#7a2a60" stroke-width=".8"/><ellipse cx="15.500" cy="365" rx="4.500" ry="2" fill="#f0a8d8" stroke="#7a2a60" stroke-width=".8"/><circle cx="27" cy="380" r="4.500" fill="#f6d0e0" stroke="#7a3a5a" stroke-width=".8"/><circle cx="27" cy="380" r="1.800" fill="#d04080"/><path d="M10 408l5-3v19l-5 3z" fill="#f0a020"/><path d="M15 405h5v19h-5z" fill="#e88818"/><path d="M15 408l5-3 5 0v19l-5 3h-5z" fill="#3cb83c"/><path d="M21 408l5-3 6 0-1 18-5 3h-5z" fill="#3a7ae0"/><path d="M10 408l5-3h17l-5 3z" fill="#d8e8f8" fill-opacity=".7"/><circle cx="18" cy="472" r="7.500" fill="#2a6ae0"/><circle cx="18" cy="472" r="7.500" fill="none" stroke="#9cc0f8" stroke-width="1"/><path d="M17 468h2v1.500h-2zM16.500 470.500h2.500v5h1v1h-4v-1h1v-4h-1z" fill="#fff"/><path d="M22 460a12 12 0 0 1 11 10M22 464a8 8 0 0 1 7 7" fill="none" stroke="#4a7ad8" stroke-width="1.800"/><path d="M13 511h12l5 5v17H13z" fill="#f4f8ff" stroke="#5a7ab8" stroke-width="1"/><circle cx="21.500" cy="525" r="5.500" fill="#2c9a4a"/><path d="M19 522q3-2 5 1-1 3 1 5-4 2-6-2z" fill="#3a6ad0"/><circle cx="22" cy="576" r="10" fill="#eef2f6" stroke="#8a929a" stroke-width="2"/><path d="M22 569v7h6" stroke="#111" stroke-width="1.800" fill="none"/><defs><linearGradient id="rb" x1="0" y1="0" x2="0" y2="1"><stop offset="0" stop-color="#e83020"/><stop offset=".3" stop-color="#f0e020"/><stop offset=".55" stop-color="#30d040"/><stop offset=".8" stop-color="#20c0e0"/><stop offset="1" stop-color="#2040e0"/></linearGradient></defs><rect x="12" y="607" width="8" height="22" fill="url(#rb)"/><path d="M22 613l8 13" stroke="#111" stroke-width="2.500"/><path d="M14 650l6 2v16l-8-1z" fill="#3a8ae0"/><path d="M20 654h12l-5 4zM24 660l7 8" stroke="#1a1a6a" stroke-width="1.500" fill="#5a9af0"/><path d="M11 668h10" stroke="#8ac040" stroke-width="1.500"/><path d="M17 708l6-9 5-8" stroke="#555" stroke-width="2.600" fill="none"/><path d="M17 708l6-9 5-8" stroke="#e8e8e8" stroke-width="1.200" fill="none"/><circle cx="17" cy="708" r="2.500" fill="#ddd" stroke="#444"/><circle cx="23" cy="699" r="2" fill="#ddd" stroke="#444"/><path d="M26 690l5 1-1 3" fill="none" stroke="#444" stroke-width="1.500"/><ellipse cx="18" cy="709" rx="6" ry="2.500" fill="#f0a830"/></svg>
<div class="a" style="left:258px;top:227px;width:1px;height:630px;background:#dfe3df"></div>
<div class="t" style="left:46px;top:236px;font-size:12px;color:#333">部件导航器</div>
<div class="a" style="left:238px;top:237px;width:12px;height:11px;border:1px solid #111;border-top-width:2.500px"></div>
<div class="a" style="left:43px;top:255px;width:214px;height:578px;border:1px solid #e0e4e0;border-bottom:none"></div>
<div class="a" style="left:44px;top:256px;width:212px;height:21px;background:linear-gradient(#f4f7f4,#eaeeea);border-bottom:1px solid #dde1dd"></div>
<div class="t" style="left:50px;top:262px;font-size:12px;color:#333">名称</div>
<svg style="left:91px;top:263px" width="10" height="7"><path d="M0.500 6.500L5 0.800L9.500 6.500z" fill="#111"/></svg>
<div class="a" style="left:248px;top:260px;width:8px;height:14px;overflow:hidden"><div class="t" style="left:0;top:1px;font-size:12px;color:#222">最</div></div>
<div class="a" style="left:44px;top:277.60px;width:212px;height:19.85px;background:#fbfdfa;border-bottom:1px solid #e8ebe8"></div>
<div class="a" style="left:44px;top:297.45px;width:212px;height:19.85px;background:#f4f7f4;border-bottom:1px solid #e8ebe8"></div>
<div class="a" style="left:44px;top:317.30px;width:212px;height:19.85px;background:#fbfdfa;border-bottom:1px solid #e8ebe8"></div>
<div class="a" style="left:44px;top:337.15px;width:212px;height:19.85px;background:#f4f7f4;border-bottom:1px solid #e8ebe8"></div>
<div class="a" style="left:44px;top:357.00px;width:212px;height:19.85px;background:#fbfdfa;border-bottom:1px solid #e8ebe8"></div>
<div class="a" style="left:44px;top:376.85px;width:212px;height:19.85px;background:#f4f7f4;border-bottom:1px solid #e8ebe8"></div>
<div class="a" style="left:44px;top:396.70px;width:212px;height:19.85px;background:#fbfdfa;border-bottom:1px solid #e8ebe8"></div>
<div class="a" style="left:44px;top:416.55px;width:212px;height:19.85px;background:#f4f7f4;border-bottom:1px solid #e8ebe8"></div>
<div class="a" style="left:44px;top:436.40px;width:212px;height:19.85px;background:#fbfdfa;border-bottom:1px solid #e8ebe8"></div>
<div class="a" style="left:44px;top:456.25px;width:212px;height:19.85px;background:#f4f7f4;border-bottom:1px solid #e8ebe8"></div>
<div class="a" style="left:44px;top:476.10px;width:212px;height:19.85px;background:#fbfdfa;border-bottom:1px solid #e8ebe8"></div>
<div class="a" style="left:44px;top:495.95px;width:212px;height:19.85px;background:#f4f7f4;border-bottom:1px solid #e8ebe8"></div>
<div class="a" style="left:44px;top:515.80px;width:212px;height:19.85px;background:#fbfdfa;border-bottom:1px solid #e8ebe8"></div>
<div class="a" style="left:44px;top:535.65px;width:212px;height:19.85px;background:#f4f7f4;border-bottom:1px solid #e8ebe8"></div>
<div class="a" style="left:44px;top:555.50px;width:212px;height:19.85px;background:#fbfdfa;border-bottom:1px solid #e8ebe8"></div>
<div class="a" style="left:44px;top:575.35px;width:212px;height:19.85px;background:#f4f7f4;border-bottom:1px solid #e8ebe8"></div>
<div class="a" style="left:44px;top:595.20px;width:212px;height:19.85px;background:#fbfdfa;border-bottom:1px solid #e8ebe8"></div>
<div class="a" style="left:44px;top:615.05px;width:212px;height:19.85px;background:#f4f7f4;border-bottom:1px solid #e8ebe8"></div>
<div class="a" style="left:44px;top:634.90px;width:212px;height:19.85px;background:#fbfdfa;border-bottom:1px solid #e8ebe8"></div>
<div class="a" style="left:44px;top:654.75px;width:212px;height:19.85px;background:#f4f7f4;border-bottom:1px solid #e8ebe8"></div>
<div class="a" style="left:44px;top:674.60px;width:212px;height:19.85px;background:#fbfdfa;border-bottom:1px solid #e8ebe8"></div>
<div class="a" style="left:44px;top:694.45px;width:212px;height:19.85px;background:#f4f7f4;border-bottom:1px solid #e8ebe8"></div>
<div class="a" style="left:44px;top:714.30px;width:212px;height:19.85px;background:#fbfdfa;border-bottom:1px solid #e8ebe8"></div>
<div class="a" style="left:44px;top:734.15px;width:212px;height:19.85px;background:#f4f7f4;border-bottom:1px solid #e8ebe8"></div>
<div class="a" style="left:44px;top:754.00px;width:212px;height:19.85px;background:#fbfdfa;border-bottom:1px solid #e8ebe8"></div>
<div class="a" style="left:44px;top:773.85px;width:212px;height:19.85px;background:#f4f7f4;border-bottom:1px solid #e8ebe8"></div>
<div class="a" style="left:44px;top:793.70px;width:212px;height:19.85px;background:#fbfdfa;border-bottom:1px solid #e8ebe8"></div>
<div class="a" style="left:44px;top:813.55px;width:212px;height:19.45px;background:#f4f7f4;border-bottom:1px solid #e8ebe8"></div>
<div class="a" style="left:243px;top:256px;width:1px;height:577px;background:#e1e5e1"></div>
<svg style="left:0;top:0" width="262" height="430" viewBox="0 0 262 430"><path d="M53.500 292v32M73.500 335v72M73.500 347h9M73.500 367h9M73.500 387h9M73.500 407h9" stroke="#9a9a9a" stroke-width="1" stroke-dasharray="1 1.500" fill="none"/><rect x="49.500" y="284" width="8" height="8" fill="#fcfefb" stroke="#e4e7e4" stroke-width=".8"/><path d="M51 288h5" stroke="#222" stroke-width="1"/><path d="M53.500 285v5" stroke="#222" stroke-width="1"/><rect x="49.500" y="304" width="8" height="8" fill="#fcfefb" stroke="#e4e7e4" stroke-width=".8"/><path d="M51 308h5" stroke="#222" stroke-width="1"/><path d="M53.500 305v5" stroke="#222" stroke-width="1"/><rect x="49.500" y="324" width="8" height="8" fill="#fcfefb" stroke="#e4e7e4" stroke-width=".8"/><path d="M51 328h5" stroke="#222" stroke-width="1"/><g fill="none" stroke="#2a9a7a" stroke-width="1.200"><path d="M63 284l7-3 6 3v7l-6 3-7-3z"/><path d="M63 284l7 3 6-3M70 287v7M70 281v6"/></g><path d="M71 295l8-3" stroke="#d03030" stroke-width="1.300"/><path d="M65.500 308l3.500 3.500 6.500-9" fill="none" stroke="#2aa83a" stroke-width="3.200"/><path d="M80 304l10-3 3 9-10 4z" fill="#fbe8e8" stroke="#c82a2a" stroke-width="1.200"/><circle cx="86" cy="306" r="3" fill="#3a3aa8"/><path d="M88 308h5v4h-5z" fill="#444"/><path d="M63 322h5l1 2h8v9H63z" fill="#f6d860" stroke="#a88a20" stroke-width=".8"/><path d="M63 333l3-7h13l-3 7z" fill="#fbe98a" stroke="#a88a20" stroke-width=".8"/><rect x="84.500" y="341.5" width="10" height="10" fill="#fff" stroke="#1a1a1a" stroke-width="1.300"/><path d="M86 347l3 3.300 4.800-7" fill="none" stroke="#2aa83a" stroke-width="2.600"/><path d="M250 346l3.500 6" stroke="#2aa83a" stroke-width="3"/><rect x="84.500" y="361.5" width="10" height="10" fill="#fff" stroke="#1a1a1a" stroke-width="1.300"/><path d="M86 367l3 3.300 4.800-7" fill="none" stroke="#2aa83a" stroke-width="2.600"/><path d="M250 366l3.500 6" stroke="#2aa83a" stroke-width="3"/><rect x="84.500" y="381.5" width="10" height="10" fill="#fff" stroke="#1a1a1a" stroke-width="1.300"/><path d="M86 387l3 3.300 4.800-7" fill="none" stroke="#2aa83a" stroke-width="2.600"/><path d="M250 386l3.500 6" stroke="#2aa83a" stroke-width="3"/><rect x="84.500" y="401.5" width="10" height="10" fill="#fff" stroke="#1a1a1a" stroke-width="1.300"/><path d="M86 407l3 3.300 4.800-7" fill="none" stroke="#2aa83a" stroke-width="2.600"/><path d="M250 406l3.500 6" stroke="#2aa83a" stroke-width="3"/><g fill="none" stroke="#222" stroke-width="1.100"><path d="M100 341v10l9 3M100 351l9-6M100 343l9 7"/></g><path d="M107 354l4 1" stroke="#d02020" stroke-width="1.300"/><path d="M101 363v9a4.500 2 0 0 0 9 0v-9" fill="#8aa0e8" stroke="#5a6ac0" stroke-width=".7"/><ellipse cx="105.500" cy="363" rx="4.500" ry="2" fill="#c8d4f8" stroke="#5a6ac0" stroke-width=".7"/><g fill="none" stroke="#1a1a1a" stroke-width="1.300"><rect x="99.500" y="381.500" width="4.500" height="4.500"/><rect x="99.500" y="388.500" width="4.500" height="4.500"/><rect x="106.500" y="388.500" width="5.500" height="4.500"/></g><path d="M106 386l5-5" stroke="#c8a020" stroke-width="2"/><path d="M100 403l3-1v9l-3 1zM103 402l3 1v9l-3-1zM106 403l3-1v9l-3 1zM109 402l3 1v9l-3-1z" fill="#f0a040" stroke="#a86010" stroke-width=".7"/><path d="M99 413l7 1.500 7-1.500" stroke="#6a6ac0" stroke-width="1.200" fill="none"/></svg>
<div class="t" style="left:82px;top:282px;font-size:12px;color:#2a2a2a;">模型视图</div>
<div class="t" style="left:98px;top:302px;font-size:12px;color:#2a2a2a;">摄像机</div>
<div class="t" style="left:82px;top:322px;font-size:12px;color:#2a2a2a;">模型历史记录</div>
<div class="t" style="left:117px;top:342px;font-size:12px;color:#2a2a2a;">基准坐标系 (0)</div>
<div class="t" style="left:117px;top:362px;font-size:12px;color:#2a2a2a;">圆柱 (1)</div>
<div class="t" style="left:117px;top:382px;font-size:12px;color:#2a2a2a;">草图 (2) "SKETCH_0...</div>
<div class="t" style="left:117px;top:402px;font-size:12px;color:#2a2a2a;font-weight:bold;">拉伸 (3)</div>
<div class="a" style="left:43px;top:833px;width:214px;height:18px;background:#f0f3f0;border:1px solid #e0e4e0"></div>
<div class="a" style="left:61px;top:835px;width:92px;height:14px;background:#c9cdca"></div>
<svg style="left:48px;top:837px" width="206" height="10"><path d="M6.500 1.500L3 5l3.500 3.500M196 1.500l3.500 3.500-3.500 3.500" fill="none" stroke="#333" stroke-width="1.600"/></svg>
<div class="a" style="left:42px;top:852px;width:215px;height:4px;background:linear-gradient(#bfc3c0,#d8dbd8)"></div>
<div class="t" style="left:49px;top:864px;font-size:13px;color:#5a8a9a">相关性</div>
<svg style="left:240px;top:863px" width="11" height="9"><path d="M1 1l4.500 6.500L10 1" fill="none" stroke="#0f6a88" stroke-width="1.800"/></svg>
<div class="a" style="left:42px;top:880px;width:215px;height:2px;background:#d5d9d6"></div>
<div class="t" style="left:49px;top:888px;font-size:13px;color:#5a8a9a">细节</div>
<svg style="left:240px;top:887px" width="11" height="9"><path d="M1 1l4.500 6.500L10 1" fill="none" stroke="#0f6a88" stroke-width="1.800"/></svg>
<div class="a" style="left:42px;top:904px;width:215px;height:2px;background:#d5d9d6"></div>
<div class="t" style="left:49px;top:911px;font-size:13px;color:#5a8a9a">预览</div>
<svg style="left:240px;top:910px" width="11" height="9"><path d="M1 1l4.500 6.500L10 1" fill="none" stroke="#0f6a88" stroke-width="1.800"/></svg>
<div class="a" style="left:42px;top:927px;width:215px;height:2px;background:#d5d9d6"></div>
<!-- p3_view -->
<div class="a" style="left:266px;top:248px;width:1636px;height:2px;background:#4f9cae"></div>
<div class="a" style="left:266px;top:250px;width:1636px;height:685px;background:linear-gradient(#b0b4b6 0%,#b9bdbe 15%,#c6cbcb 30%,#d2d7d6 45%,#dbe0df 60%,#e1e7e6 75%,#e3e9e8 100%)"></div>
<div class="a" style="left:266px;top:250px;width:1px;height:685px;background:#8e9a9c"></div>
<div class="a" style="left:266px;top:935px;width:1636px;height:1px;background:#dfe3e1"></div>
<div class="a" style="left:266px;top:227px;width:134px;height:22px;background:linear-gradient(#4b9cb2,#559ec0)"></div>
<svg style="left:273px;top:229px" width="17" height="17" viewBox="0 0 16 16"><path d="M1.500 5l5-3.500 4.500 2-3 2.500v3l5.500-2v4.500l-6.500 3.500-5.500-2.500z" fill="#2a5ad8"/><path d="M1.500 5l5-3.500 4.500 2-3 2.500-2-1z" fill="#8fc0ff"/><path d="M1.500 5l3 1.500v8l-3-1.500z" fill="#5a92f0"/><path d="M8 9.500l5.500-2.500v1.500l-5.500 2.500z" fill="#bfe0ff"/></svg>
<div class="t" style="left:293px;top:231px;font-size:13px;color:#e6f6fb">_model1.prt</div>
<svg style="left:367px;top:231px" width="12" height="12" viewBox="0 0 12 12"><path d="M2 2h5M2 2v8h7V6" fill="none" stroke="#eaf8ff" stroke-width="1.5"/><path d="M6 6l4-4M7 1.500h3.500V5" fill="none" stroke="#eaf8ff" stroke-width="1.5"/></svg>
<svg style="left:384px;top:232px" width="10" height="10" viewBox="0 0 10 10"><path d="M1 1l8 8M9 1l-8 8" stroke="#f4fcff" stroke-width="2"/></svg>
<svg style="left:0;top:0" width="1920" height="1072" viewBox="0 0 1920 1072"><defs><linearGradient id="sideg" gradientUnits="userSpaceOnUse" x1="682.0" y1="697.7" x2="1034.4" y2="809.9"><stop offset="0" stop-color="#b87603"/><stop offset="0.05" stop-color="#c27e03"/><stop offset="0.15" stop-color="#c17d03"/><stop offset="0.3" stop-color="#b57403"/><stop offset="0.45" stop-color="#a76b02"/><stop offset="0.6" stop-color="#9c6402"/><stop offset="0.7" stop-color="#9a6302"/><stop offset="0.82" stop-color="#a26802"/><stop offset="0.93" stop-color="#ab6f02"/><stop offset="1" stop-color="#a66b02"/></linearGradient><linearGradient id="holeg" gradientUnits="userSpaceOnUse" x1="868" y1="440" x2="1048" y2="480"><stop offset="0" stop-color="#b87a06"/><stop offset="0.3" stop-color="#a56c04"/><stop offset="0.6" stop-color="#a86e04"/><stop offset="1" stop-color="#bc7c06"/></linearGradient><clipPath id="holeclip"><ellipse cx="958.4" cy="454.0" rx="92.5" ry="47.0" transform="rotate(17.65 958.4 454.0)"/></clipPath></defs><path d="M781.2 397.9L682.0 697.7A184.9 93.9 17.65 0 0 1034.4 809.9L1133.6 510.1Z" fill="url(#sideg)"/><ellipse cx="957.4" cy="454.0" rx="184.9" ry="93.9" transform="rotate(17.65 957.4 454.0)" fill="#fdc703" stroke="#5a4a10" stroke-width="0.8"/><ellipse cx="958.4" cy="454.0" rx="92.5" ry="47.0" transform="rotate(17.65 958.4 454.0)" fill="url(#holeg)"/><g clip-path="url(#holeclip)"><ellipse cx="948.4" cy="485.0" rx="92.5" ry="47.0" transform="rotate(17.65 948.4 485.0)" fill="#fdc703"/></g><ellipse cx="958.4" cy="454.0" rx="92.5" ry="47.0" transform="rotate(17.65 958.4 454.0)" fill="none" stroke="#6d68b8" stroke-width="1.3"/><path d="M875.8 700.6L941.3 715.2L923.1 770.9L858.8 754.0L875.8 700.6" fill="none" stroke="#e9e2d2" stroke-width="1.1"/><path d="M923.1 770.9L921.4 804.4L856.9 787.9L858.8 754.0" fill="none" stroke="#e9e2d2" stroke-width="1.1"/><path d="M875.8 700.6L875.3 733.4L856.9 787.9" fill="none" stroke="#e9e2d2" stroke-width="1.1"/><path d="M856.9 787.9L892.3 650.0" fill="none" stroke="#e9e2d2" stroke-width="1.1"/><path d="M858.0 760.0L854.7 815.0" fill="none" stroke="#e9e2d2" stroke-width="1.1"/><path d="M858.8 754.0L975.0 782.5" fill="none" stroke="#e9e2d2" stroke-width="1.1"/><path d="M972 778l16 8-17 0z" fill="#f2f0ec"/><path d="M889 662l3.500-15 3 16z" fill="#c9c9c9"/><path d="M851.500 812l3 12 3.500-12z" fill="#efefef"/><text x="890" y="645" font-size="12" fill="#d8d2c6" font-family="Liberation Sans,sans-serif">Z</text><text x="988" y="792" font-size="12" fill="#e6e0d4" font-family="Liberation Sans,sans-serif">Y</text><text x="849" y="831" font-size="11" fill="#efece6" font-family="Liberation Sans,sans-serif">X</text><defs><filter id="cblur" x="-10%" y="-10%" width="120%" height="120%"><feGaussianBlur stdDeviation="1.100"/></filter></defs><circle cx="816" cy="580.500" r="29.300" fill="#df3a06" fill-opacity=".96" filter="url(#cblur)"/><g transform="translate(816 580.500)" fill="none" stroke-linecap="round"><g stroke="#b41808" stroke-width="3.200" stroke-opacity=".8"><path d="M4.900 -9.300A11 11 0 0 0 -10.300 3.500"/><path d="M-4.100 10.800A11 11 0 0 0 11.800 -2.500"/><path d="M-14 0.500L-10.300 5.500L-6.500 1.200"/><path d="M8 -0.500L11.800 -5L15.500 -0.800"/><path d="M-3.200 1.500h7M0.300 -2v7"/></g><g stroke="#ffb4b0" stroke-width="1.500"><path d="M4.900 -9.300A11 11 0 0 0 -10.300 3.500"/><path d="M-4.100 10.800A11 11 0 0 0 11.800 -2.500"/><path d="M-14 0.500L-10.300 5.500L-6.500 1.200"/><path d="M8 -0.500L11.800 -5L15.500 -0.800"/><path d="M-3.200 1.500h7M0.300 -2v7"/></g></g></svg>
<svg style="left:310px;top:830px;filter:blur(.5px)" width="70" height="80" viewBox="0 0 70 80"><path d="M20 33l4-5 19 3 0 24-4 6-19-5z" fill="#d3d7d4"/><path d="M20 33l4-5 19 3-4 5z" fill="#dfe3e0"/><path d="M39 36l4-5v24l-4 6z" fill="#c3c8c5"/><path d="M20 41.500l19 4M20 49.500l19 4" stroke="#e4e8e5" stroke-width="1.600"/><path d="M13.500 44L22 21" stroke="#1a28c4" stroke-width="3.200"/><path d="M18.500 24l6-9 1 11z" fill="#1a28c4"/><path d="M13.300 46v14" stroke="#dc4a4a" stroke-width="3"/><path d="M9.800 57l3.500 8 3.500-8z" fill="#d84040"/><path d="M40 52l5 .8" stroke="#3a9a48" stroke-width="2.400"/><path d="M43 49.500l7.500 4-8 1.800z" fill="#3a9a48"/><circle cx="13.400" cy="44.600" r="2.300" fill="#f6f6f4"/><text x="22" y="13.500" font-size="11" fill="#5a5ad8" font-family="Liberation Sans,sans-serif">Z</text><text x="52.500" y="59.500" font-size="11" fill="#4a9a58" font-family="Liberation Sans,sans-serif">Y</text><text x="9.800" y="73.500" font-size="10.500" fill="#d85858" font-family="Liberation Sans,sans-serif">X</text></svg>
<!-- p4_bottom -->
<div class="a" style="left:4px;top:1002px;width:1898px;height:2px;background:linear-gradient(#cfd2cf,#e6e9e6)"></div>
<div class="t" style="left:8px;top:1007px;font-size:11.500px;color:#111;letter-spacing:-0.300px;-webkit-text-stroke:.3px #111">拖动光标以绕 X-Y 旋转视图</div>
<div class="t" style="left:899px;top:1007px;font-size:11.300px;font-weight:bold;color:#2a2a2a;letter-spacing:-0.300px">绕 X-Y 旋转视图</div>
<svg style="left:1811.500px;top:1006px" width="36" height="15" viewBox="0 0 36 15"><rect x="0.500" y="1" width="12" height="12" fill="#e4e7e4" stroke="#cfd2cf"/><path d="M3 4l7 6M3 10l7-6M3 7h7" stroke="#b8bcb8" stroke-width="1"/><path d="M21 2h3M29 2h3v3M32 10v3h-3M24 13h-3v-3M21 5V2" fill="none" stroke="#7a8a98" stroke-width="1"/><rect x="23" y="4" width="7" height="7" fill="#d8e4f4" stroke="#4a5a8a" stroke-width="1"/><rect x="24.500" y="6" width="4" height="3" fill="#5a6ab0"/></svg>
<div class="a" style="left:0;top:1024px;width:1906px;height:8px;background:linear-gradient(#63a9bc,#4a98b4 40%,#4a96b6)"></div>
<div class="a" style="left:0;top:1032px;width:1920px;height:40px;background:#020304"></div>
<div class="a" style="left:588px;top:1032px;width:48px;height:40px;background:#3a3b3c"></div>
<svg style="left:0;top:1032px" width="1920" height="40" viewBox="0 1032 1920 40"><path d="M16 1046.500l7-1v6.500h-7zM24 1045.300l8-1.300v8h-8zM16 1053h7v6.500l-7-1zM24 1053h8v8l-8-1.300z" fill="#fff"/><rect x="66.500" y="1045.500" width="11" height="13" fill="none" stroke="#fff" stroke-width="1.300"/><path d="M65 1047h-2.500v10H65M79 1047h2.500v10H79" fill="none" stroke="#fff" stroke-width="1.300"/><rect x="102" y="1037" width="234" height="30" fill="#fcfefb"/><g fill="#2a7ae0"><ellipse cx="113.500" cy="1051" rx="2" ry="2.600"/><ellipse cx="117.500" cy="1047" rx="1.800" ry="2.600"/><ellipse cx="122.500" cy="1047" rx="1.800" ry="2.600"/><ellipse cx="126.500" cy="1051" rx="2" ry="2.600"/><path d="M112.500 1059c0-4 4-6 7.500-6s7.500 2 7.500 6c0 2.500-2 3.500-4 3.500h-7c-2 0-4-1-4-3.500z"/></g><text x="114.500" y="1061.500" font-size="7.500" font-weight="bold" fill="#fff" font-family="Liberation Sans,sans-serif">du</text><path d="M136 1055l5.500-5 5.500 5" fill="none" stroke="#8a8a8a" stroke-width="1.300"/><circle cx="319" cy="1050" r="6" fill="none" stroke="#1aa0d8" stroke-width="3"/><path d="M322 1054l6 6" stroke="#1aa0d8" stroke-width="3.200"/><path d="M319 1050h7M326 1044h4M327 1048h4" stroke="#1aa0d8" stroke-width="1.800"/><circle cx="367" cy="1052" r="11" fill="#5ad048"/><circle cx="367" cy="1052" r="9" fill="none" stroke="#e8ffe0" stroke-width="1.600"/><path d="M361 1052h11a5 5 0 1 0-1.500 4" fill="none" stroke="#fff" stroke-width="2.600"/><rect x="404" y="1040" width="24" height="24" rx="2" fill="#18c020"/><rect x="407.500" y="1044" width="17" height="14" rx="2" fill="none" stroke="#d8ffd8" stroke-width="1.300"/><text x="409" y="1055.500" font-size="9" font-weight="bold" fill="#e8ffe8" font-family="Liberation Sans,sans-serif">IIY</text><path d="M454 1044h7l2 2h13v15h-22z" fill="#f0d060"/><path d="M454 1049h22v12h-22z" fill="#f8e088"/><path d="M459 1054h12v8h-12z" fill="#3a9ae0"/><path d="M462 1059h6v3h-6z" fill="#f8e088"/><rect x="502" y="1040" width="24" height="24" rx="5" fill="#fdfdfd"/><g fill="none" stroke="#3a6ae0" stroke-width="2.200"><circle cx="514" cy="1049" r="3.500"/><circle cx="509.500" cy="1055" r="3.500"/><circle cx="518.500" cy="1055" r="3.500"/></g><path d="M511 1062h3" stroke="#e04040" stroke-width="1.500"/><path d="M514 1062h3" stroke="#3a6ae0" stroke-width="1.500"/><rect x="551" y="1040" width="24" height="24" rx="5" fill="#2a8ae8"/><rect x="553" y="1042" width="20" height="20" rx="3" fill="#4aa8f4"/><path d="M555 1044h16l-8 16z" fill="#d8f0ff"/><path d="M560 1047h7l-3.500 8z" fill="#4aa8f4"/><circle cx="611" cy="1054" r="8.500" fill="#2a88d8"/><path d="M604 1042l11 1-5 10z" fill="#d82850"/><path d="M610 1053l9-10 1 8z" fill="#e8f4ff"/><path d="M600 1060q12 4 22-10" fill="none" stroke="#f0b020" stroke-width="2.500"/><path d="M606 1058q4 3 9 1" fill="none" stroke="#30a040" stroke-width="2"/><path d="M654 1042l12-1 4 19-14 3z" fill="#b8dce8"/><path d="M650 1058l6-16 2 20z" fill="#7ab0c0"/><path d="M656 1042l12-1 1 4-13 2z" fill="#e0f0f4"/><rect x="445" y="1070" width="40" height="2" fill="#86bce4"/><rect x="494" y="1070" width="40" height="2" fill="#86bce4"/><rect x="543" y="1070" width="40" height="2" fill="#86bce4"/><rect x="588" y="1070" width="48" height="2" fill="#86bce4"/><rect x="641" y="1070" width="40" height="2" fill="#86bce4"/><path d="M1500 1042l13-3 3 15-13 3z" fill="#28a838"/><text x="1502.500" y="1055" font-size="13" font-weight="bold" fill="#fff" font-family="Liberation Sans,sans-serif" transform="rotate(-10 1508 1050)">S</text><rect x="1529" y="1044" width="16" height="16" rx="2" fill="#2a78d0"/><path d="M1531 1055q4-8 7 0t6-8" fill="none" stroke="#e8f4ff" stroke-width="2"/><rect x="1553" y="1044" width="16" height="15" rx="1" fill="#18b828"/><text x="1554.500" y="1055" font-size="7" font-weight="bold" fill="#e8ffe8" font-family="Liberation Sans,sans-serif">iQIYI</text><ellipse cx="1584" cy="1054" rx="5" ry="6.500" fill="#e8b020"/><circle cx="1584" cy="1047" r="3.500" fill="#d83020"/><rect x="1586" y="1051" width="7" height="6" rx="1" fill="#f0d040"/><circle cx="1609" cy="1052" r="8" fill="#d81818"/><path d="M1602.500 1050q6.500 4 13 0" stroke="#300" stroke-width="2.500" fill="none"/><path d="M1604 1055q5 3 10 0" stroke="#f8a0a0" stroke-width="1.500" fill="none"/><rect x="1625" y="1044" width="16" height="16" rx="4" fill="#fdfdfd"/><g fill="none" stroke="#3a6ae0" stroke-width="1.600"><circle cx="1633" cy="1049.500" r="2.400"/><circle cx="1630" cy="1054" r="2.400"/><circle cx="1636" cy="1054" r="2.400"/></g><rect x="1649" y="1044" width="16" height="16" rx="1" fill="#3a98c8"/><path d="M1651 1047h9v6h-9zM1655 1050h8v7h-8z" fill="none" stroke="#d8f0ff" stroke-width="1.200"/><path d="M1651 1059l12-2" stroke="#e8d040" stroke-width="1.500"/><rect x="1678" y="1048" width="12" height="8" fill="none" stroke="#fff" stroke-width="1.300"/><path d="M1690 1050.500h1.500v3h-1.500" stroke="#fff" fill="none"/><path d="M1675 1045v4M1677.500 1045v4M1674 1049h5v3h-1.500v3" fill="none" stroke="#fff" stroke-width="1.100"/><g transform="translate(3 0)"><g fill="none" stroke="#e8e8e8" stroke-width="1.300"><path d="M1700 1059a9 9 0 0 1 9-9"/><path d="M1703.500 1059a5.500 5.500 0 0 1 5.500-5.500"/><path d="M1697 1059a12 12 0 0 1 12-12" stroke="#9a9a9a"/></g><circle cx="1708.500" cy="1058.500" r="1.500" fill="#fff"/></g><path d="M1722 1049.500h3l4-3.500v12l-4-3.500h-3z" fill="none" stroke="#fff" stroke-width="1.200"/><path d="M1731.500 1049a4 4 0 0 1 0 6M1734 1047a7 7 0 0 1 0 10" fill="none" stroke="#fff" stroke-width="1.100"/><rect x="1746" y="1045" width="14" height="14" rx="3" fill="#e8fbff"/><circle cx="1752.500" cy="1051.500" r="3.200" fill="none" stroke="#18a8c8" stroke-width="2"/><path d="M1754.500 1054l3 3" stroke="#18a8c8" stroke-width="2"/><path d="M1879 1045h15v11h-9l-3 3v-3h-3z" fill="#fff"/><path d="M1881.500 1048h10M1881.500 1050.500h10M1881.500 1053h6" stroke="#111" stroke-width="1"/><circle cx="1894" cy="1059" r="6" fill="#2a2a2a" stroke="#5a5a5a" stroke-width="1"/><text x="1891.700" y="1062.500" font-size="9.500" font-weight="bold" fill="#fff" font-family="Liberation Sans,sans-serif">1</text></svg>
<div class="t" style="left:1800px;top:1036.500px;font-size:12.500px;color:#fff">20:19</div>
<div class="t" style="left:1771px;top:1055px;font-size:12.500px;letter-spacing:.35px;color:#fff">2018/4/19/周四</div>
<div class="a" style="left:1916px;top:1032px;width:1px;height:40px;background:#4a4a4a"></div>
<!-- p4b_btoolbars -->
<div class="a" style="left:16px;top:968px;width:403px;height:1px;background:#e6e9e6"></div>
<svg style="left:0;top:930px;filter:blur(.4px)" width="1920" height="75" viewBox="0 930 1920 75"><rect x="6.8" y="939" width="1.600" height="1.600" fill="#9aa09c"/><rect x="7.8" y="942" width="1.600" height="1.600" fill="#9aa09c"/><rect x="6.8" y="945" width="1.600" height="1.600" fill="#9aa09c"/><rect x="7.8" y="948" width="1.600" height="1.600" fill="#9aa09c"/><rect x="6.8" y="951" width="1.600" height="1.600" fill="#9aa09c"/><rect x="7.8" y="954" width="1.600" height="1.600" fill="#9aa09c"/><rect x="6.8" y="957" width="1.600" height="1.600" fill="#9aa09c"/><rect x="7.8" y="960" width="1.600" height="1.600" fill="#9aa09c"/><rect x="6.8" y="963" width="1.600" height="1.600" fill="#9aa09c"/><g transform="translate(27.0 952.0)"><path d="M-6.5 -3.5h9.0v11.0h-9.0z" fill="#a8b4ec" stroke="#8a98d0" stroke-width=".6" stroke-linejoin="round"/><path d="M-6.5 -3.5l4.0 -4.0h9.0l-4.0 4.0z" fill="#d0d8f4" stroke="#8a98d0" stroke-width=".6" stroke-linejoin="round"/><path d="M2.5 -3.5l4.0 -4.0v11.0l-4.0 4.0z" fill="#8090d8" stroke="#8a98d0" stroke-width=".6" stroke-linejoin="round"/><path d="M-10-7v14M-11-7h2M-11 7h2" fill="none" stroke="#d04848" stroke-width="1"/><path d="M-2-10l5-3 2 2-5 4z" fill="#a8c070"/></g><g transform="translate(59.0 952.0)"><g transform="translate(0 3)"><path d="M-6.0 -3.0h9.0v9.0h-9.0z" fill="#a8b4ec" stroke="#8a98d0" stroke-width=".6" stroke-linejoin="round"/><path d="M-6.0 -3.0l3.0 -3.0h9.0l-3.0 3.0z" fill="#d0d8f4" stroke="#8a98d0" stroke-width=".6" stroke-linejoin="round"/><path d="M3.0 -3.0l3.0 -3.0v9.0l-3.0 3.0z" fill="#8090d8" stroke="#8a98d0" stroke-width=".6" stroke-linejoin="round"/></g><path d="M-9-9h16M-9-11v4M7-11v4M-3-9v8" fill="none" stroke="#d04848" stroke-width="1"/><text x="-1.0" y="-3.0" font-size="6" fill="#d04848" font-weight="normal" text-anchor="middle" font-family="Liberation Sans,Noto Sans CJK SC,sans-serif">x</text></g><path d="M77.0 950.2h6l-3 3.600z" fill="#111"/><g transform="translate(101.0 952.0)"><path d="M0 -7.0L7.0 -3.1L0 0.7L-7.0 -3.1Z" fill="#e0e0e0" stroke="#8a8a90" stroke-width="0.5" stroke-linejoin="round"/><path d="M-7.0 -3.1L0 0.7L0 7.0L-7.0 3.1Z" fill="#c0c0c4" stroke="#8a8a90" stroke-width="0.5" stroke-linejoin="round"/><path d="M7.0 -3.1L0 0.7L0 7.0L7.0 3.1Z" fill="#a0a0a8" stroke="#8a8a90" stroke-width="0.5" stroke-linejoin="round"/><path d="M-8 8l6-3M-6-8l5 3" fill="none" stroke="#d04848" stroke-width="1"/></g><path d="M121.0 950.2h6l-3 3.600z" fill="#111"/><g transform="translate(145.5 952.0)"><g transform="translate(1 3)"><path d="M0 -6.0L6.0 -2.7L0 0.6L-6.0 -2.7Z" fill="#e4e4e4" stroke="#8a8a90" stroke-width="0.5" stroke-linejoin="round"/><path d="M-6.0 -2.7L0 0.6L0 6.0L-6.0 2.7Z" fill="#c8c8cc" stroke="#8a8a90" stroke-width="0.5" stroke-linejoin="round"/><path d="M6.0 -2.7L0 0.6L0 6.0L6.0 2.7Z" fill="#a8a8b0" stroke="#8a8a90" stroke-width="0.5" stroke-linejoin="round"/></g><path d="M-7-9v6M-4-9v6M-9-6h8" fill="none" stroke="#e08848" stroke-width="1"/></g><path d="M163.0 950.2h6l-3 3.600z" fill="#111"/><g transform="translate(187.0 952.0)"><path d="M-9.0 -4.0h13.0v13.0h-13.0z" fill="#d8dcec" stroke="#5a68b8" stroke-width=".6" stroke-linejoin="round"/><path d="M-9.0 -4.0l5.0 -5.0h13.0l-5.0 5.0z" fill="#d8e0f4" stroke="#5a68b8" stroke-width=".6" stroke-linejoin="round"/><path d="M4.0 -4.0l5.0 -5.0v13.0l-5.0 5.0z" fill="#4a68d0" stroke="#5a68b8" stroke-width=".6" stroke-linejoin="round"/><circle cx="-3" cy="3" r="4.500" fill="#f4c898" stroke="#e08838" stroke-width="1"/><path d="M-6 2q3-2 6 0M-6 4.500q3-2 6 0" fill="none" stroke="#e08838" stroke-width="0.8"/></g><path d="M206.0 950.2h6l-3 3.600z" fill="#111"/><g transform="translate(229.7 952.0)"><path d="M-10-5l9-5 11 4-9 5z" fill="#c8ccc8" stroke="#6a6e6a" stroke-width="0.8"/><path d="M-10-5l11 4v5l-11-4zM1-1l9-5v5l-9 5z" fill="#9a9e9a" stroke="#6a6e6a" stroke-width="0.6"/><path d="M-10 5h14M-10 7.500h12M-10 10h10" fill="none" stroke="#d03848" stroke-width="1.1"/><path d="M3 9l8-9 2 2-8 9z" fill="#f0b840" stroke="#a87818" stroke-width="0.6"/></g><path d="M249.0 950.2h6l-3 3.600z" fill="#111"/><g transform="translate(273.0 952.0)"><text x="-9.0" y="-2.0" font-size="11" fill="#3a3a98" font-weight="bold" text-anchor="start" font-family="Liberation Sans,Noto Sans CJK SC,sans-serif">A</text><text x="-5.0" y="9.0" font-size="17" fill="#3a3aa8" font-weight="bold" text-anchor="start" font-family="Liberation Sans,Noto Sans CJK SC,sans-serif" font-style="italic" font-family="Liberation Serif,serif">A</text><path d="M-7 10.500h17" fill="none" stroke="#3a3aa8" stroke-width="1.3"/></g><path d="M292.6 950.2h6l-3 3.600z" fill="#111"/><g transform="translate(316.0 952.0)"><text x="-1.0" y="11.0" font-size="19" fill="#2a2a2a" font-weight="normal" text-anchor="middle" font-family="Liberation Sans,Noto Sans CJK SC,sans-serif" font-family="Liberation Serif,serif">A</text><circle cx="-1" cy="-4" r="6.500" fill="#e8ece8" fill-opacity=".85" stroke="#8a8e8a" stroke-width="1.300"/><path d="M4 1l6 6" fill="none" stroke="#8a8e8a" stroke-width="2.4"/></g><g transform="translate(347.0 952.0)"><text x="-8.0" y="-2.0" font-size="9" fill="#2a2a2a" font-weight="bold" text-anchor="middle" font-family="Liberation Sans,Noto Sans CJK SC,sans-serif" font-family="Liberation Serif,serif">A</text><text x="3.0" y="11.0" font-size="16" fill="#2a2a2a" font-weight="bold" text-anchor="middle" font-family="Liberation Sans,Noto Sans CJK SC,sans-serif" font-family="Liberation Serif,serif">A</text><path d="M-3-8q6-2 7 4" fill="none" stroke="#e08838" stroke-width="1.4"/><path d="M1-4l3 3 2-4z" fill="#e08838"/></g><path d="M366.4 950.2h6l-3 3.600z" fill="#111"/><g transform="translate(390.0 952.0)"><path d="M-10 4l5-11 8-3 1 9 6 3-2 6-12 2z" fill="#b8bcb8" stroke="#4a4e4a" stroke-width="0.9"/><path d="M-5-7l8-3 1 9-8 3z" fill="#d4d8d4" stroke="#4a4e4a" stroke-width="0.7"/><ellipse cx="0" cy="7" rx="2.500" ry="1.200" fill="#555"/><path d="M-10-6l4-4M5-8h6M6-5h5v9h-4" fill="none" stroke="#e89848" stroke-width="1.1"/></g><path d="M408.8 956.2h6l-3 3.600z" fill="#111"/><path d="M419.0 937V969" stroke="#e4e7e4" stroke-width="1"/><rect x="6.8" y="973" width="1.600" height="1.600" fill="#9aa09c"/><rect x="7.8" y="976" width="1.600" height="1.600" fill="#9aa09c"/><rect x="6.8" y="979" width="1.600" height="1.600" fill="#9aa09c"/><rect x="7.8" y="982" width="1.600" height="1.600" fill="#9aa09c"/><rect x="6.8" y="985" width="1.600" height="1.600" fill="#9aa09c"/><rect x="7.8" y="988" width="1.600" height="1.600" fill="#9aa09c"/><rect x="6.8" y="991" width="1.600" height="1.600" fill="#9aa09c"/><rect x="7.8" y="994" width="1.600" height="1.600" fill="#9aa09c"/><rect x="6.8" y="997" width="1.600" height="1.600" fill="#9aa09c"/><g transform="translate(27.0 986.0)"><circle cx="-6" cy="-7" r="3" fill="#6a6a6a"/><circle cx="2" cy="-6" r="3.500" fill="#6a6a6a"/><g transform="translate(0 4)"><path d="M0 -6.0L6.0 -2.7L0 0.6L-6.0 -2.7Z" fill="#f8f0a0" stroke="#b0a030" stroke-width="0.5" stroke-linejoin="round"/><path d="M-6.0 -2.7L0 0.6L0 6.0L-6.0 2.7Z" fill="#f0e068" stroke="#b0a030" stroke-width="0.5" stroke-linejoin="round"/><path d="M6.0 -2.7L0 0.6L0 6.0L6.0 2.7Z" fill="#d8c040" stroke="#b0a030" stroke-width="0.5" stroke-linejoin="round"/></g></g><path d="M38.0 987.2h6l-3 3.600z" fill="#111"/><g transform="translate(70.0 986.0)"><path d="M0 -9.0L9.0 -4.0L0 0.9L-9.0 -4.0Z" fill="#e8e8e8" stroke="#7a7a80" stroke-width="0.6" stroke-linejoin="round"/><path d="M-9.0 -4.0L0 0.9L0 9.0L-9.0 4.0Z" fill="#d0d0d4" stroke="#7a7a80" stroke-width="0.6" stroke-linejoin="round"/><path d="M9.0 -4.0L0 0.9L0 9.0L9.0 4.0Z" fill="#b8b8c0" stroke="#7a7a80" stroke-width="0.6" stroke-linejoin="round"/><path d="M-4 0l4 2v5M4 0l-4 2" fill="none" stroke="#7a7a80" stroke-width="0.6"/></g><g transform="translate(101.0 986.0)"><rect x="-9" y="-8" width="18" height="16" fill="#e4e4e8" stroke="#8a8a90" stroke-width=".8"/><rect x="-5" y="-3" width="10" height="8" fill="#c8c8d0"/></g><g transform="translate(132.0 986.0)"><ellipse cx="-2" cy="2" rx="7" ry="6" fill="#d8e088"/><path d="M1-4h10M6-9v10" fill="none" stroke="#3a68d0" stroke-width="1.5"/></g><path d="M152.0 984.2h6l-3 3.600z" fill="#111"/><g transform="translate(175.0 986.0)"><path d="M0 -9.0L9.0 -4.0L0 0.9L-9.0 -4.0Z" fill="#f8f0b0" stroke="#c0b048" stroke-width="0.5" stroke-linejoin="round"/><path d="M-9.0 -4.0L0 0.9L0 9.0L-9.0 4.0Z" fill="#f4e890" stroke="#c0b048" stroke-width="0.5" stroke-linejoin="round"/><path d="M9.0 -4.0L0 0.9L0 9.0L9.0 4.0Z" fill="#e8d870" stroke="#c0b048" stroke-width="0.5" stroke-linejoin="round"/><g stroke="#6a6a6a" stroke-width="3.400" fill="none"><path d="M4.0 0.0V8.0M0.0 4.0H8.0"/></g><path d="M4.0 -3.0l3.500 4h-7zM4.0 11.0l3.500-4h-7zM-3.0 4.0l4-3.500v7zM11.0 4.0l-4-3.500v7z" fill="#f8f8f8" stroke="#6a6a6a" stroke-width="1"/><g stroke="#f8f8f8" stroke-width="1.600" fill="none"><path d="M4.0 -1.0V9.0M-1.0 4.0H9.0"/></g></g><g transform="translate(205.6 986.0)"><path d="M-8-11l7 5-7 5zM8-11l-7 5 7 5z" fill="#2a2ab0"/><path d="M0-13v26" fill="none" stroke="#1a1a1a" stroke-width="1" stroke-dasharray="2 1.500"/><rect x="-10" y="3" width="8" height="8" fill="#f0e858" stroke="#6a6a28" stroke-width=".8"/><path d="M2 11v-9l9 9z" fill="#d02838"/></g><g transform="translate(237.0 986.0)"><path d="M-10-7l5 4-5 4z" fill="#28a048"/><path d="M-9 1l5 4-5 4z" fill="#d03838"/><path d="M2-4h10M7-11v7" fill="none" stroke="#2a2a2a" stroke-width="1.2"/><path d="M2 8l8-8M5 10l8-8" fill="none" stroke="#7a3838" stroke-width="1.2"/></g><path d="M255.0 973V1000" stroke="#d9dcd9" stroke-width="1"/><g transform="translate(274.5 986.0)"><path d="M-4-10h7v6h5v7h-7v-6h-5z" fill="#f8f0a8" stroke="#8a8038" stroke-width="1"/><path d="M-4-4h7v6h-7z" fill="none" stroke="#8a8038" stroke-width="1"/><path d="M-10 7q0-5 5-4l4 1-2 3-3 0q-1 3-4 0z" fill="#d8d070" stroke="#9a9030" stroke-width="0.8"/></g><g transform="translate(306.0 986.0)"><rect x="2" y="-10" width="6" height="6" fill="#fdfdfd" stroke="#2a2a2a" stroke-width="1.200"/><rect x="-3" y="-3" width="6" height="6" fill="#fdfdfd" stroke="#2a2a2a" stroke-width="1.200"/><rect x="-9" y="4" width="6" height="6" fill="#f8e8a0" stroke="#d03838" stroke-width="1.200"/></g><path d="M323.0 973V1000" stroke="#d9dcd9" stroke-width="1"/><g transform="translate(342.0 986.0)"><rect x="-11" y="-11" width="20" height="19" fill="#f8e870" stroke="#b8a830" stroke-width=".8"/><rect x="-9" y="-9" width="6" height="5" fill="#f0c838" stroke="#b89820" stroke-width=".5"/><rect x="-1" y="-9" width="6" height="5" fill="#f0c838" stroke="#b89820" stroke-width=".5"/><rect x="-9" y="-2" width="6" height="5" fill="#f0c838" stroke="#b89820" stroke-width=".5"/><rect x="-1" y="-2" width="6" height="5" fill="#f0c838" stroke="#b89820" stroke-width=".5"/><path d="M-8 3l3 2 3-4 2 5 3-3-2 7-8 1z" fill="#58a838"/><rect x="2" y="-1" width="10" height="12" fill="#e8e8f8" stroke="#5a5a98" stroke-width=".8"/><rect x="5" y="-3" width="4" height="3" fill="#8a8ab0"/><path d="M4 3h2M7 3h3M4 6h2M7 6h3" fill="none" stroke="#5a5a98" stroke-width="1"/></g><path d="M360.4 973V1000" stroke="#d9dcd9" stroke-width="1"/><g transform="translate(378.6 986.0)"><path d="M0 -10.0L10.0 -4.5L0 1.0L-10.0 -4.5Z" fill="#e0e0e0" stroke="#6a6a6a" stroke-width="0.6" stroke-linejoin="round"/><path d="M-10.0 -4.5L0 1.0L0 10.0L-10.0 4.5Z" fill="#c8c8c8" stroke="#6a6a6a" stroke-width="0.6" stroke-linejoin="round"/><path d="M10.0 -4.5L0 1.0L0 10.0L10.0 4.5Z" fill="#989898" stroke="#6a6a6a" stroke-width="0.6" stroke-linejoin="round"/><path d="M3-2l5-3v5l-5 3z" fill="#f8f8f8" stroke="#d04848" stroke-width="0.6"/><rect x="-10" y="3" width="12" height="7" fill="#f0d890" stroke="#b09848" stroke-width=".7"/><path d="M-8 6h6" fill="none" stroke="#b09848" stroke-width="1"/></g><path d="M397.6 973V1000" stroke="#d9dcd9" stroke-width="1"/><g transform="translate(416.0 986.0)"><g fill="none" stroke="#98b848" stroke-width="2.200"><ellipse cx="-1" cy="-5" rx="3.500" ry="5.500"/><ellipse cx="1" cy="4" rx="3.500" ry="5.500"/></g></g><g transform="translate(446.4 986.0)"><path d="M-9-8h16v3h-16zM-9-8v8" fill="none" stroke="#2a2a2a" stroke-width="1.2"/><path d="M-11-2l2 4 2-4z" fill="#2a2a2a"/><g transform="translate(4 4) scale(.75)"><g fill="none" stroke="#98b848" stroke-width="2.200"><ellipse cx="-1" cy="-5" rx="3.500" ry="5.500"/><ellipse cx="1" cy="4" rx="3.500" ry="5.500"/></g></g></g><g transform="translate(478.4 986.0)"><path d="M-11 0h8l6-7h7M-3 0l6 0h7M-3 0l6 7" fill="none" stroke="#2a2a2a" stroke-width="1.2"/><rect x="3" y="-9.500" width="9" height="4" rx="2" fill="#fdfdfd" stroke="#2a2a2a" stroke-width="1"/><rect x="3" y="-2" width="9" height="4" rx="2" fill="#fdfdfd" stroke="#2a2a2a" stroke-width="1"/><rect x="1" y="3" width="9" height="9" fill="#ececfc" stroke="#3a3a98" stroke-width="1.200"/><text x="5.5" y="11.0" font-size="9" fill="#111" font-weight="bold" text-anchor="middle" font-family="Liberation Sans,Noto Sans CJK SC,sans-serif" font-family="Liberation Serif,serif">i</text></g><path d="M496.0 973V1000" stroke="#d9dcd9" stroke-width="1"/><g transform="translate(513.0 986.0)"><g transform="translate(4 -5)"><path d="M0 -5.5L5.5 -2.5L0 0.6L-5.5 -2.5Z" fill="#e8e8e8" stroke="#3a3a3a" stroke-width="0.7" stroke-linejoin="round"/><path d="M-5.5 -2.5L0 0.6L0 5.5L-5.5 2.5Z" fill="#c8c8c8" stroke="#3a3a3a" stroke-width="0.7" stroke-linejoin="round"/><path d="M5.5 -2.5L0 0.6L0 5.5L5.5 2.5Z" fill="#b0b0b0" stroke="#3a3a3a" stroke-width="0.7" stroke-linejoin="round"/></g><g transform="translate(-5 3)"><path d="M0 -5.5L5.5 -2.5L0 0.6L-5.5 -2.5Z" fill="#e8e8e8" stroke="#3a3a3a" stroke-width="0.7" stroke-linejoin="round"/><path d="M-5.5 -2.5L0 0.6L0 5.5L-5.5 2.5Z" fill="#c8c8c8" stroke="#3a3a3a" stroke-width="0.7" stroke-linejoin="round"/><path d="M5.5 -2.5L0 0.6L0 5.5L5.5 2.5Z" fill="#b0b0b0" stroke="#3a3a3a" stroke-width="0.7" stroke-linejoin="round"/></g><g transform="translate(3 5)"></g></g><path d="M530.6 983.2h6l-3 3.600z" fill="#111"/><path d="M541.4 990.2h6l-3 3.600z" fill="#111"/><path d="M552.0 971V1002" stroke="#e4e7e4" stroke-width="1"/><rect x="556.4" y="973" width="1.600" height="1.600" fill="#9aa09c"/><rect x="557.4" y="976" width="1.600" height="1.600" fill="#9aa09c"/><rect x="556.4" y="979" width="1.600" height="1.600" fill="#9aa09c"/><rect x="557.4" y="982" width="1.600" height="1.600" fill="#9aa09c"/><rect x="556.4" y="985" width="1.600" height="1.600" fill="#9aa09c"/><rect x="557.4" y="988" width="1.600" height="1.600" fill="#9aa09c"/><rect x="556.4" y="991" width="1.600" height="1.600" fill="#9aa09c"/><rect x="557.4" y="994" width="1.600" height="1.600" fill="#9aa09c"/><rect x="556.4" y="997" width="1.600" height="1.600" fill="#9aa09c"/><g transform="translate(576.4 986.0)"><path d="M-10-10l18 3v17l-18-3z" fill="#e4e6e4" stroke="#3a3a3a" stroke-width="1.2"/><rect x="-7" y="-5" width="5" height="4" fill="none" stroke="#3a3a3a" stroke-width="1"/><rect x="0" y="-3" width="5" height="4" fill="none" stroke="#3a3a3a" stroke-width="1"/><rect x="-7" y="2" width="5" height="4" fill="none" stroke="#3a3a3a" stroke-width="1"/><rect x="0" y="4" width="5" height="4" fill="none" stroke="#3a3a3a" stroke-width="1"/><path d="M7-11l1.500 3 3.500-1-2 3 3 2-3.500 0.500-1 3.500-1.500-3-3.500 1 2-3-3-2 3.500-.5z" fill="#d8e848"/></g><rect x="597.500" y="975.500" width="20" height="21" fill="#e4e8e4" stroke="#d4d8d4" stroke-width="1"/><rect x="600" y="978" width="3" height="3" fill="#c4c8c4"/><rect x="600" y="984" width="3" height="3" fill="#c4c8c4"/><rect x="603" y="981" width="3" height="3" fill="#c4c8c4"/><rect x="603" y="987" width="3" height="3" fill="#c4c8c4"/><rect x="606" y="978" width="3" height="3" fill="#c4c8c4"/><rect x="606" y="984" width="3" height="3" fill="#c4c8c4"/><rect x="609" y="981" width="3" height="3" fill="#c4c8c4"/><rect x="609" y="987" width="3" height="3" fill="#c4c8c4"/><rect x="612" y="978" width="3" height="3" fill="#c4c8c4"/><rect x="612" y="984" width="3" height="3" fill="#c4c8c4"/><path d="M600 976v20" fill="none" stroke="#c4c8c4" stroke-width="1.2"/><text x="623.0" y="989.5" font-size="11" fill="#d0d4d0" font-weight="normal" text-anchor="start" font-family="Liberation Sans,Noto Sans CJK SC,sans-serif">完成草图</text><g transform="translate(686.0 986.0)"><path d="M-10-10v13a4 4 0 0 0 8 0v-3a4.500 4.500 0 0 1 9 0v6" fill="none" stroke="#2a2a2a" stroke-width="1.3"/><circle cx="-10" cy="2" r="1.900" fill="#c02848"/><circle cx="-2" cy="1" r="1.900" fill="#c02848"/><circle cx="7" cy="1" r="1.900" fill="#c02848"/></g><g transform="translate(717.0 986.0)"><path d="M-8 8l16-16" fill="none" stroke="#3a3a3a" stroke-width="1.2"/><circle cx="-8" cy="8" r="1.900" fill="#c02848"/><circle cx="8" cy="-8" r="1.900" fill="#c02848"/></g><g transform="translate(748.0 986.0)"><path d="M-9-8q14 0 18 16" fill="none" stroke="#7a2838" stroke-width="1.5"/><circle cx="-9" cy="-8" r="1.900" fill="#c02848"/><circle cx="3" cy="-4" r="1.900" fill="#c02848"/><circle cx="9" cy="8" r="1.900" fill="#c02848"/></g><g transform="translate(779.3 986.0)"><circle cx="0" cy="0" r="10" fill="none" stroke="#2a2a2a" stroke-width="1.200"/></g><g transform="translate(810.0 986.0)"><path d="M-10-8h12q7 0 7 8v10" fill="none" stroke="#c4c8c4" stroke-width="1.2"/></g><g transform="translate(840.6 986.0)"><path d="M-10-9h10l9 9v10M0-9h9v9" fill="none" stroke="#c4c8c4" stroke-width="1.1"/></g><g transform="translate(872.0 986.0)"><rect x="-10" y="-7" width="19" height="14" fill="none" stroke="#2a2a2a" stroke-width="1.300"/><circle cx="-10" cy="-7" r="1.900" fill="#c02848"/><circle cx="9" cy="7" r="1.900" fill="#c02848"/></g><g transform="translate(904.0 986.0)"><path d="M-10 2l5-8 8 13 6-9" fill="none" stroke="#c02848" stroke-width="1.3"/><path d="M-5-6l1-7M3 7l0 5M9-2l2-3" fill="none" stroke="#9a9e9a" stroke-width="1"/><circle cx="-10" cy="2" r="1.800" fill="#9a9e9a"/><circle cx="-4" cy="-13" r="1.800" fill="#9a9e9a"/><circle cx="3" cy="12" r="1.800" fill="#9a9e9a"/><circle cx="11" cy="-5" r="1.800" fill="#9a9e9a"/><circle cx="-5" cy="-6" r="1.900" fill="#c02848"/><circle cx="3" cy="7" r="1.900" fill="#c02848"/><circle cx="9" cy="-2" r="1.900" fill="#c02848"/></g><g transform="translate(934.3 986.0)"><path d="M0-8v16M-8 0h16" fill="none" stroke="#1a1a1a" stroke-width="1.5"/></g><g transform="translate(965.0 986.0)"><path d="M-9 9v-11l6-6h6q7 1 5 8l-4 3 1 6z" fill="none" stroke="#a8aca8" stroke-width="1.2"/><path d="M-5 5v-6l4-4h3q4 1 3 4l-3 2 0 4z" fill="none" stroke="#b8bcb8" stroke-width="1"/></g><path d="M984.0 983.2h6l-3 3.600z" fill="#111"/><path d="M995.7 973V1000" stroke="#d9dcd9" stroke-width="1"/><g transform="translate(1013.7 986.0)"><path d="M-8-10l10 20M-10 4h12" fill="none" stroke="#c4c8c4" stroke-width="1.2"/><path d="M3 3h8" fill="none" stroke="#c4c8c4" stroke-width="1" stroke-dasharray="1 1"/><path d="M4-2l3-3 3 1" fill="none" stroke="#c4c8c4" stroke-width="1.5"/></g><g transform="translate(1044.7 986.0)"><path d="M-7-10l10 20M-11 3h10" fill="none" stroke="#c4c8c4" stroke-width="1.2"/><path d="M0 1l8-8 2 2-8 8z" fill="none" stroke="#c4c8c4" stroke-width="1"/></g><g transform="translate(1076.0 986.0)"><path d="M-2-10v21M-12-1h9l9-6M-3-1l9 7" fill="none" stroke="#c4c8c4" stroke-width="1.1"/><path d="M3-3h8" fill="none" stroke="#c4c8c4" stroke-width="1" stroke-dasharray="1 1"/></g><path d="M1094.4 973V1000" stroke="#d9dcd9" stroke-width="1"/><g transform="translate(1113.0 986.0)"><path d="M-10-5v11M10-5v11M-9 1h18" fill="none" stroke="#c4c8c4" stroke-width="1.2"/><path d="M-4 3l6-9 4 2" fill="none" stroke="#d8dcd8" stroke-width="2"/></g><path d="M1132.0 983.2h6l-3 3.600z" fill="#111"/><path d="M1143.7 973V1000" stroke="#d9dcd9" stroke-width="1"/><g transform="translate(1162.0 986.0)"><path d="M-10 4l8-8M-6 6l8-8M0 10h10M5 2v8" fill="none" stroke="#c4c8c4" stroke-width="1.2"/></g><g transform="translate(1192.5 986.0)"><path d="M-7-8h-3v17h3M7-8h3v17h-3" fill="none" stroke="#b8bcb8" stroke-width="1.3"/><path d="M0-10v21" fill="none" stroke="#c4c8c4" stroke-width="1" stroke-dasharray="3 1.500"/><path d="M-4-10v5M4-10v5" fill="none" stroke="#c4c8c4" stroke-width="1"/></g><g transform="translate(1224.6 986.0)"><path d="M-11-3l5 4-5 4z" fill="#c4c8c4"/><path d="M-3 0l8-8M1 2l8-8M-1 12h11M4 3v9" fill="none" stroke="#c4c8c4" stroke-width="1.2"/></g><path d="M1243.3 983.2h6l-3 3.600z" fill="#111"/><path d="M1254.4 973V1000" stroke="#d9dcd9" stroke-width="1"/><g transform="translate(1272.7 986.0)"><rect x="-10" y="-10" width="9" height="9" fill="none" stroke="#9a9e9a" stroke-width="1.100"/><rect x="-1" y="1" width="12" height="10" fill="none" stroke="#9a9e9a" stroke-width="1.100"/><rect x="-10" y="4" width="6" height="6" fill="none" stroke="#b8bcb8" stroke-width="1"/><path d="M3-6q4-3 6 2" fill="none" stroke="#c4c8c4" stroke-width="1.5"/></g><g transform="translate(1303.6 986.0)"><g transform="translate(-3 4)"><path d="M0 -6.0L6.0 -2.7L0 0.6L-6.0 -2.7Z" fill="#eceeec" stroke="#c0c4c0" stroke-width="0.6" stroke-linejoin="round"/><path d="M-6.0 -2.7L0 0.6L0 6.0L-6.0 2.7Z" fill="#dcdedc" stroke="#c0c4c0" stroke-width="0.6" stroke-linejoin="round"/><path d="M6.0 -2.7L0 0.6L0 6.0L6.0 2.7Z" fill="#cccecc" stroke="#c0c4c0" stroke-width="0.6" stroke-linejoin="round"/></g><g transform="translate(6 5)"><path d="M0 -5.0L5.0 -2.2L0 0.5L-5.0 -2.2Z" fill="#eceeec" stroke="#c0c4c0" stroke-width="0.6" stroke-linejoin="round"/><path d="M-5.0 -2.2L0 0.5L0 5.0L-5.0 2.2Z" fill="#dcdedc" stroke="#c0c4c0" stroke-width="0.6" stroke-linejoin="round"/><path d="M5.0 -2.2L0 0.5L0 5.0L5.0 2.2Z" fill="#cccecc" stroke="#c0c4c0" stroke-width="0.6" stroke-linejoin="round"/></g><path d="M-2-5a4.500 4.500 0 1 0-7 2M1-4l5-6 3 2" fill="none" stroke="#b4b8b4" stroke-width="1.6"/></g><g transform="translate(1333.4 986.0)"><g transform="translate(3 5)"><path d="M-8.0 -1.0h12.0v6.0h-12.0z" fill="#dcdedc" stroke="#c4c8c4" stroke-width=".6" stroke-linejoin="round"/><path d="M-8.0 -1.0l4.0 -4.0h12.0l-4.0 4.0z" fill="#eceeec" stroke="#c4c8c4" stroke-width=".6" stroke-linejoin="round"/><path d="M4.0 -1.0l4.0 -4.0v6.0l-4.0 4.0z" fill="#cccecc" stroke="#c4c8c4" stroke-width=".6" stroke-linejoin="round"/></g><path d="M0-4a4.500 4.500 0 1 0-6 3M0 0v5" fill="none" stroke="#b4b8b4" stroke-width="1.6"/><ellipse cx="2" cy="3" rx="4" ry="3" fill="#d8dcd8"/></g><path d="M1353.3 990.2h6l-3 3.600z" fill="#111"/><path d="M1364.3 971V1002" stroke="#e4e7e4" stroke-width="1"/></svg>
<!-- p5_overlays -->
<div class="a" style="left:1902px;top:1px;width:4px;height:1024px;background:#fbfdfa"></div>
<div class="a" style="left:1905px;top:1px;width:1px;height:1031px;background:#bfc3c0"></div>
<div class="a" style="left:1906px;top:1px;width:14px;height:1031px;background:#fbfdfa"></div>
<div class="a" style="left:1906px;top:1px;width:13px;height:47px;background:linear-gradient(#39445f,#445272 60%,#55627c)"></div>
<div class="a" style="left:1906px;top:48px;width:13px;height:130px;background:linear-gradient(90deg,#cfd2cd,#e2e5e2 50%,#d4d7d6)"></div>
<div class="a" style="left:1906px;top:151px;width:5px;height:27px;background:#7aa4b4;border-top:2px solid #111;border-right:1.500px solid #111"></div>
<div class="a" style="left:1906px;top:227px;width:14px;height:1px;background:#d4d7d4"></div>
<svg style="left:1906px;top:8px" width="14" height="34"><path d="M6 2l-4 4 4 4" fill="none" stroke="#e8ecf4" stroke-width="1.600"/><path d="M0 24q5-2 8 4" fill="none" stroke="#fff" stroke-width="1.800"/></svg>
<div class="a" style="left:1906px;top:941px;width:14px;height:3px;background:linear-gradient(#e4e7e4,#c4c8c4)"></div>
<div class="a" style="left:1906px;top:944px;width:7px;height:81px;border:1px solid #7a7e7a;border-top:none;border-left:none;background:#f0f3f0"></div>
<div class="a" style="left:1906px;top:950px;width:2px;height:26px;background:#b4b8b4"></div>
<div class="a" style="left:1917px;top:944px;width:1px;height:88px;background:#c4c8c4"></div>
<div class="a" style="left:1709px;top:28px;width:104px;height:24px;border-radius:4px;background:#dfe8fb;overflow:hidden;box-shadow:0 0 0 1px rgba(90,140,240,.55)"><div class="a" style="left:0;top:0;width:29px;height:24px;background:#4f8cf2"></div><div class="a" style="left:29px;top:0;width:75px;height:24px;background:linear-gradient(#eef2fd,#dbe4fa)"></div></div>
<svg style="left:1714px;top:31px" width="20" height="18" viewBox="0 0 20 18"><g fill="none" stroke="#fff" stroke-width="2.300"><circle cx="10" cy="6" r="3.300"/><circle cx="5.500" cy="11.500" r="3.300"/><circle cx="14.500" cy="11.500" r="3.300"/></g></svg>
<div class="t" style="left:1751px;top:34px;font-size:12px;color:#8a9ad6">拖拽上传</div>
<svg style="left:1630px;top:50px" width="230" height="70" viewBox="1630 50 230 70"><g fill="#fdfefc" fill-opacity=".55" stroke="#cdd1cd" stroke-width="1.100" stroke-linejoin="round"><path d="M1649 86v12l21 13 20-13v-10"/><path d="M1670 56l32 20.500-32 23.500-10-6-4 3-17.700-20.500z"/><path d="M1666 69v16l13-8z"/></g><path d="M1649 98l7-5 14 8 20-13" fill="none" stroke="#cdd1cd" stroke-width="1.100"/><text x="1708" y="97" font-size="35.500" font-weight="bold" fill="#fdfefc" stroke="#c9cdc9" stroke-width="1" font-family="Liberation Sans,Noto Sans CJK SC,sans-serif">腾讯课堂</text></svg>
<svg style="left:1700px;top:780px" width="140" height="80" viewBox="1700 780 140 80"><defs><clipPath id="wc"><circle cx="1739.500" cy="818.600" r="29.800"/></clipPath><filter id="sh" x="-20%" y="-20%" width="140%" height="140%"><feGaussianBlur stdDeviation="2"/></filter></defs><rect x="1738" y="798" width="94" height="46" rx="23" fill="#9aa4a8" fill-opacity=".35" filter="url(#sh)"/><rect x="1736" y="797" width="95" height="45.500" rx="22.700" fill="#3c444c"/><circle cx="1739.500" cy="818.600" r="29.800" fill="#1c3145"/><g clip-path="url(#wc)"><path d="M1705 829q10-3 18 0t18-1 18 1 12-1v25h-66z" fill="#0f5a82"/><path d="M1717 824q6-2 12 0t12 0" fill="none" stroke="#2a6a78" stroke-width="2.500" stroke-opacity=".8"/></g><path d="M1742 790.300a28.400 28.400 0 0 1 24.500 39" fill="none" stroke="#2fc4b2" stroke-width="1.700"/><text x="1725" y="830.500" font-size="27" fill="#dff2ff" font-weight="300" textLength="24" lengthAdjust="spacingAndGlyphs" font-family="Liberation Sans,sans-serif">30</text><text x="1751" y="828.500" font-size="11" fill="#dff2ff" font-family="Liberation Sans,sans-serif">%</text><path d="M1776.500 807.500v9M1773 811l3.500-3.500 3.500 3.500" fill="none" stroke="#2a9ce0" stroke-width="1.800"/><path d="M1776.500 824v9M1773 829.500l3.500 3.500 3.500-3.500" fill="none" stroke="#f2a324" stroke-width="1.800"/><text x="1787.500" y="816" font-size="10.500" fill="#eef2f4" font-family="Liberation Sans,sans-serif">188<tspan dx="2" fill="#d0d4d8">K/s</tspan></text><text x="1788.500" y="833" font-size="10.500" fill="#eef2f4" font-family="Liberation Sans,sans-serif">8.3<tspan dx="2" fill="#d0d4d8">K/s</tspan></text></svg>
<svg style="left:1636px;top:881px" width="100" height="78" viewBox="0 0 100 78"><defs><clipPath id="cc"><rect x="0.500" y="0.500" width="98.500" height="76.500" rx="6"/></clipPath><filter id="cb" x="-10%" y="-10%" width="120%" height="120%"><feGaussianBlur stdDeviation="1.600"/></filter><filter id="cb2"><feGaussianBlur stdDeviation=".6"/></filter></defs><rect x="0.500" y="0.500" width="98.500" height="76.500" rx="6" fill="#e6e7e5" stroke="#cfd2d0" stroke-width="1"/><g clip-path="url(#cc)"><g filter="url(#cb)"><rect x="0" y="0" width="66" height="78" fill="#ebe9ec"/><path d="M0 0h38l-10 7-12 5-16 12z" fill="#6a686e"/><path d="M12 14l22-10 16 0 6 20-10 16-20-4z" fill="#c9c7cc"/><path d="M21 10l9 26M29 6l7 26M37 5l5 22M16 16l8 18" stroke="#8a888e" stroke-width="2.400"/><path d="M0 24l14-8 8 24-10 14-12-2z" fill="#f1eff2"/><path d="M52 0l10 0 -2 14-6 4z" fill="#a5a3a8"/><path d="M56 2l4 0-1 9z" fill="#d9cfd4"/><path d="M40 46l8-4 5 12-7 7z" fill="#c9c4c9"/><path d="M2 56l30 2 26 2 4 18-62 0z" fill="#f0eef0"/><path d="M21 76l5-10 7-1 9 13z" fill="#b0aeb2"/><path d="M27 66l2 10M32 66l3 10" stroke="#8e8c90" stroke-width="1.500"/><path d="M4 40l8 2" stroke="#9a989c" stroke-width="3"/><rect x="64" y="0" width="36" height="78" fill="#e4e5e2"/><ellipse cx="92" cy="71" rx="9" ry="7" fill="#dbe4b4"/><path d="M68 44l10 16" stroke="#d4dcc4" stroke-width="3"/></g><g filter="url(#cb2)"><ellipse cx="50.500" cy="36.800" rx="6.200" ry="4.800" fill="#4e4f53" transform="rotate(-30 50.500 36.800)"/><ellipse cx="51" cy="36.300" rx="3.400" ry="2.700" fill="#8d9a94" transform="rotate(-30 51 36.300)"/><circle cx="51" cy="36.500" r="1.300" fill="#3a3b3e"/><ellipse cx="25.800" cy="48" rx="6.800" ry="4.600" fill="#4e4f53" transform="rotate(-6 25.800 48)"/><ellipse cx="26" cy="48" rx="3.800" ry="2.800" fill="#8d9a94"/><circle cx="26.300" cy="48" r="1.400" fill="#3a3b3e"/><path d="M43 56.500l5.500-1-2 4.500z" fill="#6c6468"/><path d="M11 47l-9 4M12 50l-8 6" stroke="#fafafa" stroke-width=".8"/></g></g><text x="72.500" y="24.500" font-size="17.500" fill="#3d3d3b" font-family="Noto Sans CJK SC,sans-serif">中</text><path d="M77 34.500q2 0.500 1.500 2.500t-2.500 2.500" fill="none" stroke="#3d3d3b" stroke-width="1.700"/><circle cx="83.500" cy="44.500" r="2.200" fill="none" stroke="#3d3d3b" stroke-width="1.300"/><text x="72.500" y="68" font-size="17.500" fill="#45452d" font-family="Noto Sans CJK SC,sans-serif">半</text></svg>
<div class="a" style="left:0;top:857px;width:192px;height:190px;background:rgba(255,255,255,.52)"></div>
<svg style="left:0;top:857px" width="200" height="190" viewBox="0 857 200 190"><g fill="none" stroke="#7b7f80" stroke-width="1.100"><path d="M70 915L95 876L118 915"/><path d="M40 972L17 1010H175L151 972"/><path d="M19 898.500H177" stroke-dasharray="4 2.500"/><path d="M19 898.500L36 928M177 898.500L166 918" stroke-dasharray="4 2.500"/><path d="M73 991L98 1033L122 991" stroke-dasharray="4 2.500"/></g><text x="24" y="948" font-size="36" font-weight="100" fill="#5f6365" textLength="141" lengthAdjust="spacingAndGlyphs" font-family="Noto Sans CJK SC,sans-serif">一诺科技</text><text x="42" y="987" font-size="36" font-weight="100" fill="#5f6365" textLength="106" lengthAdjust="spacingAndGlyphs" font-family="Noto Sans CJK SC,sans-serif">工作组</text></svg>
</body></html>
